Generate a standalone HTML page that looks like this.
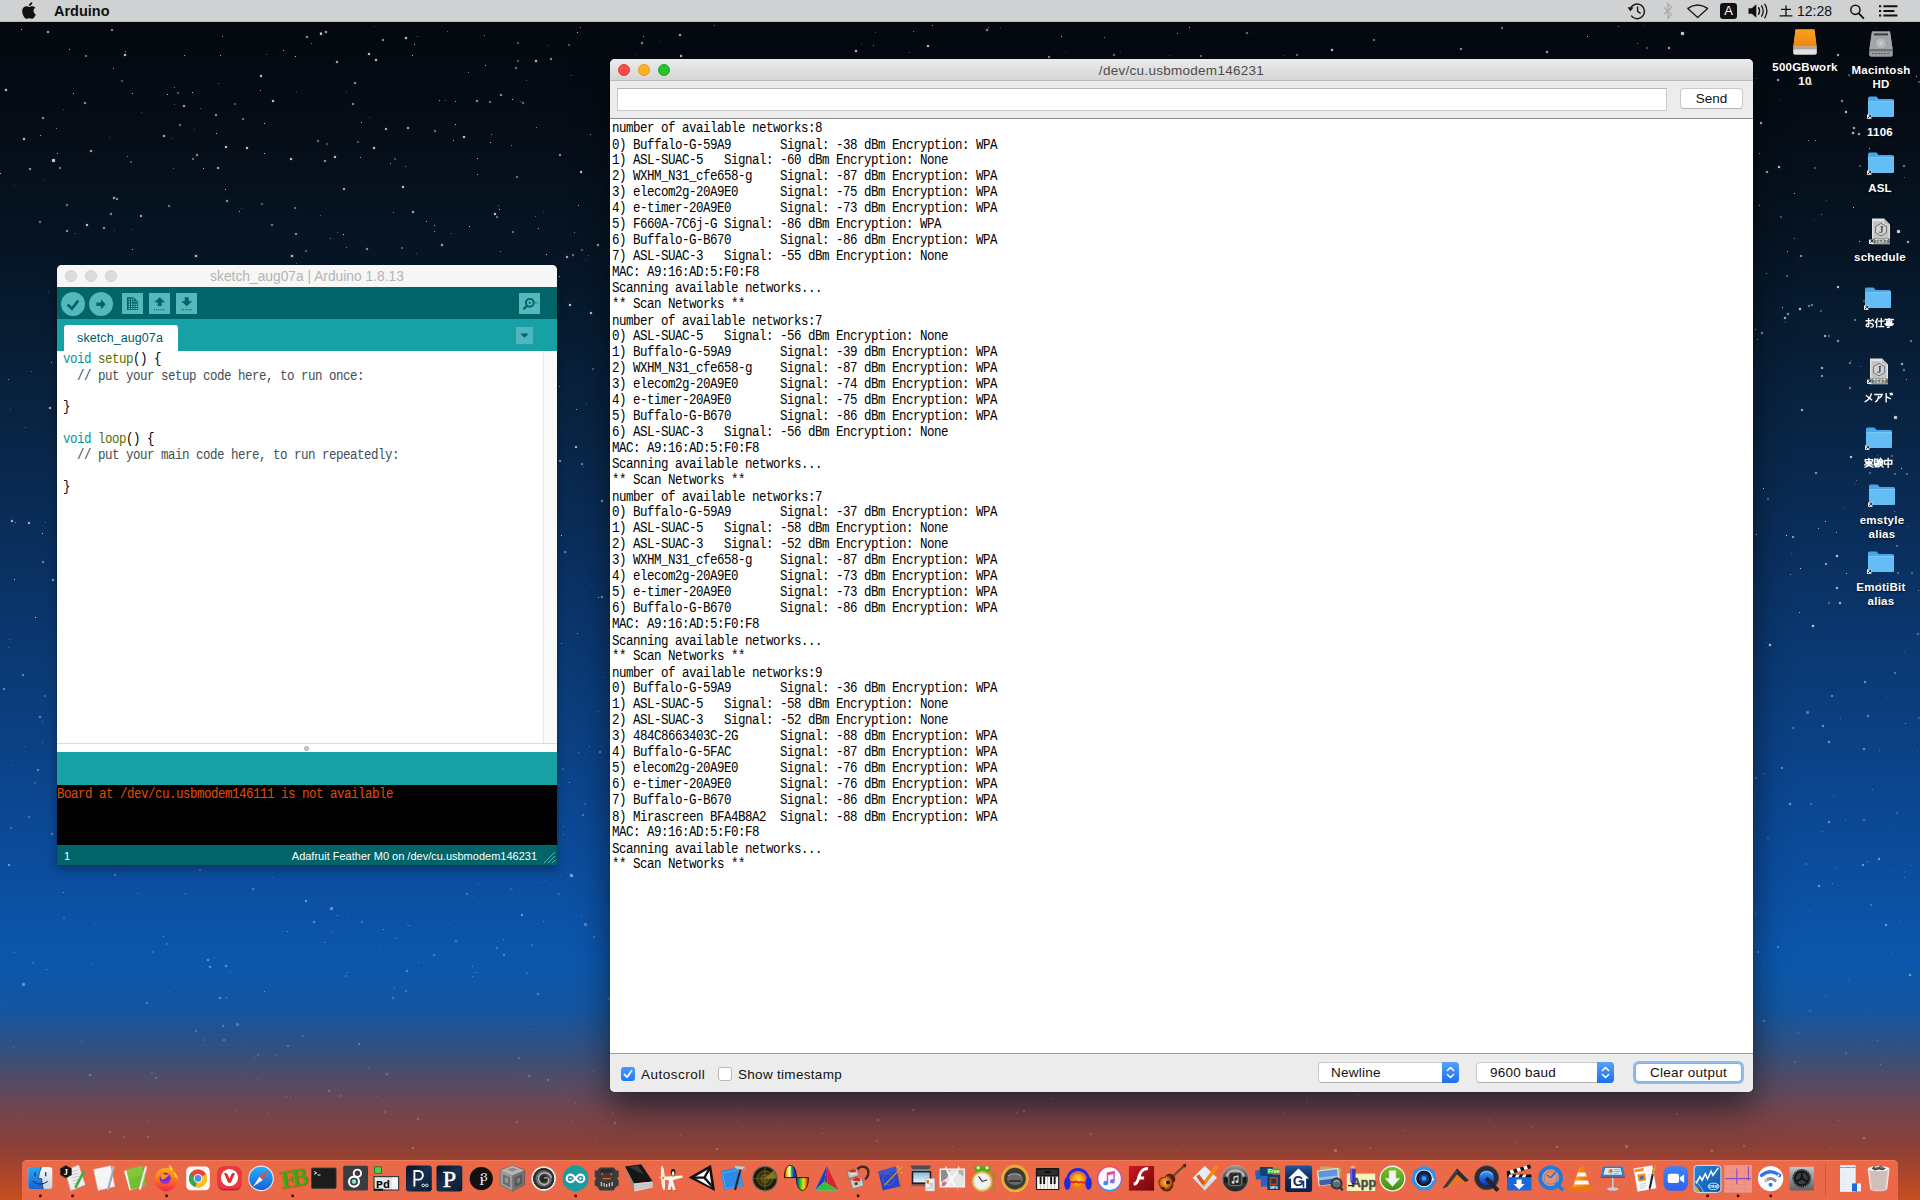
<!DOCTYPE html>
<html>
<head>
<meta charset="utf-8">
<title>Desktop</title>
<style>
*{box-sizing:border-box;margin:0;padding:0}
html,body{width:1920px;height:1200px;overflow:hidden}
body{font-family:"Liberation Sans",sans-serif;position:relative;
background:linear-gradient(to bottom,#04080d 0px,#050c15 120px,#061525 250px,#08223f 400px,#0a3060 560px,#0b3f80 720px,#0b4c9c 860px,#0b57ac 960px,#14559f 1010px,#33507f 1050px,#584b61 1085px,#77444a 1115px,#8a4038 1145px,#a8452c 1172px,#c74f20 1200px)}
.abs{position:absolute}
/* ---------- menubar ---------- */
#menubar{position:absolute;left:0;top:0;width:1920px;height:22px;background:#cfd1d2;border-bottom:1px solid #b9b9b9}
#menubar .app{position:absolute;left:54px;top:3px;font-weight:bold;font-size:14.5px;color:#111;letter-spacing:0px}
#menubar .clock{position:absolute;left:1797px;top:3px;font-size:14px;color:#111}
/* ---------- windows ---------- */
.win{position:absolute;overflow:hidden}
#ard{left:57px;top:265px;width:500px;height:600px;border-radius:5px 5px 0 0;background:#fff;box-shadow:0 5px 11px rgba(0,0,0,.32),0 0 1px rgba(0,0,0,.5)}
#ser{left:610px;top:59px;width:1143px;height:1033px;border-radius:5px;background:#ececec;box-shadow:0 16px 34px rgba(0,0,0,.52),0 0 1px rgba(0,0,0,.6)}
/*STARS*/
.st1{position:absolute;left:0;top:0;width:1px;height:1px;background:transparent;box-shadow:148px 1121px 0px rgba(200,222,250,0.32),439px 100px 0px rgba(235,240,250,0.65),185px 893px 0px rgba(200,222,250,0.52),593px 882px 0px rgba(200,222,250,0.16),1016px 1112px 0px rgba(200,222,250,0.32),1891px 952px 0px rgba(200,222,250,0.23),241px 1072px 0px rgba(200,222,250,0.14),1911px 1025px 0px rgba(200,222,250,0.10),46px 969px 0px rgba(200,222,250,0.52),239px 1035px 0px rgba(200,222,250,0.14),1877px 1040px 0px rgba(200,222,250,0.32),577px 32px 0px rgba(235,240,250,0.80),420px 1105px 0px rgba(200,222,250,0.10),1552px 1105px 0px rgba(200,222,250,0.10),1860px 366px 0px rgba(235,240,250,0.35),409px 1084px 0px rgba(200,222,250,0.10),451px 233px 0px rgba(235,240,250,0.35),988px 27px 0px rgba(235,240,250,0.50),267px 1113px 0px rgba(200,222,250,0.26),1808px 140px 0px rgba(235,240,250,0.50),57px 153px 0px rgba(235,240,250,0.80),1794px 238px 0px rgba(235,240,250,0.50),1766px 273px 0px rgba(235,240,250,0.50),536px 127px 0px rgba(235,240,250,0.50),512px 99px 0px rgba(235,240,250,0.80),503px 939px 0px rgba(200,222,250,0.42),92px 964px 0px rgba(200,222,250,0.33),913px 31px 0px rgba(235,240,250,0.50),374px 26px 0px rgba(235,240,250,0.25),174px 87px 0px rgba(235,240,250,0.50),1838px 1120px 0px rgba(200,222,250,0.26),472px 966px 0px rgba(200,222,250,0.42),595px 1081px 0px rgba(200,222,250,0.10),1830px 1148px 0px rgba(200,222,250,0.26),35px 617px 0px rgba(235,240,250,0.80),1877px 455px 0px rgba(235,240,250,0.25),290px 1097px 0px rgba(200,222,250,0.32),574px 232px 0px rgba(235,240,250,0.50),1911px 865px 0px rgba(200,222,250,0.23),1867px 1150px 0px rgba(200,222,250,0.20),577px 633px 0px rgba(235,240,250,0.50),499px 209px 0px rgba(235,240,250,0.80),1836px 532px 0px rgba(235,240,250,0.65),260px 90px 0px rgba(235,240,250,0.65),0px 173px 0px rgba(235,240,250,0.80),174px 104px 0px rgba(235,240,250,0.35),203px 168px 0px rgba(235,240,250,0.80),1618px 26px 0px rgba(235,240,250,0.50),113px 68px 0px rgba(235,240,250,0.65),472px 976px 0px rgba(200,222,250,0.33),1888px 829px 0px rgba(200,222,250,0.16),346px 247px 0px rgba(235,240,250,0.50),71px 974px 0px rgba(200,222,250,0.16),1840px 718px 0px rgba(200,222,250,0.33),1892px 588px 0px rgba(235,240,250,0.80),1876px 157px 0px rgba(235,240,250,0.35),1900px 1040px 0px rgba(200,222,250,0.20),132px 93px 0px rgba(235,240,250,0.80),426px 221px 0px rgba(235,240,250,0.65),272px 877px 0px rgba(200,222,250,0.23),407px 923px 0px rgba(200,222,250,0.23),576px 409px 0px rgba(235,240,250,0.65),1039px 1101px 0px rgba(200,222,250,0.26),75px 233px 0px rgba(235,240,250,0.35),1872px 789px 0px rgba(200,222,250,0.33),1904px 177px 0px rgba(235,240,250,0.35),1587px 36px 0px rgba(235,240,250,0.80),445px 100px 0px rgba(235,240,250,0.35),1359px 1150px 0px rgba(200,222,250,0.14),417px 36px 0px rgba(235,240,250,0.35),266px 54px 0px rgba(235,240,250,0.35),1869px 1012px 0px rgba(200,222,250,0.26),1813px 1031px 0px rgba(200,222,250,0.14),1833px 795px 0px rgba(200,222,250,0.33),235px 1110px 0px rgba(200,222,250,0.26),361px 122px 0px rgba(235,240,250,0.80),270px 1024px 0px rgba(200,222,250,0.10),25px 427px 0px rgba(235,240,250,0.35),164px 950px 0px rgba(200,222,250,0.16),1901px 468px 0px rgba(235,240,250,0.80),31px 371px 0px rgba(235,240,250,0.35),777px 1122px 0px rgba(200,222,250,0.10),1756px 78px 0px rgba(235,240,250,0.35),296px 91px 0px rgba(235,240,250,0.25),63px 109px 0px rgba(235,240,250,0.25),1777px 810px 0px rgba(200,222,250,0.23),416px 253px 0px rgba(235,240,250,0.25),603px 677px 0px rgba(200,222,250,0.33),42px 742px 0px rgba(200,222,250,0.33),348px 917px 0px rgba(200,222,250,0.23),590px 134px 0px rgba(235,240,250,0.65),225px 189px 0px rgba(235,240,250,0.80),1826px 200px 0px rgba(235,240,250,0.25),347px 972px 0px rgba(200,222,250,0.33),337px 232px 0px rgba(235,240,250,0.35),69px 49px 0px rgba(235,240,250,0.65),1832px 883px 0px rgba(200,222,250,0.42),512px 891px 0px rgba(200,222,250,0.16),1859px 241px 0px rgba(235,240,250,0.80),125px 51px 0px rgba(235,240,250,0.65),380px 949px 0px rgba(200,222,250,0.23),1621px 1118px 0px rgba(200,222,250,0.32),541px 882px 0px rgba(200,222,250,0.23),1104px 37px 0px rgba(235,240,250,0.50),1764px 773px 0px rgba(200,222,250,0.52),581px 915px 0px rgba(200,222,250,0.33),222px 36px 0px rgba(235,240,250,0.65),1794px 193px 0px rgba(235,240,250,0.65),1780px 99px 0px rgba(235,240,250,0.25),1872px 51px 0px rgba(235,240,250,0.35),1766px 642px 0px rgba(235,240,250,0.25),169px 991px 0px rgba(200,222,250,0.23),1283px 55px 0px rgba(235,240,250,0.25),1758px 204px 0px rgba(235,240,250,0.25),264px 991px 0px rgba(200,222,250,0.52),1889px 126px 0px rgba(235,240,250,0.35),600px 1044px 0px rgba(200,222,250,0.20),296px 263px 0px rgba(235,240,250,0.35),598px 597px 0px rgba(235,240,250,0.80),1818px 528px 0px rgba(235,240,250,0.65),580px 27px 0px rgba(235,240,250,0.50),941px 1131px 0px rgba(200,222,250,0.10),393px 212px 0px rgba(235,240,250,0.50),1755px 329px 0px rgba(235,240,250,0.65),192px 92px 0px rgba(235,240,250,0.80),520px 101px 0px rgba(235,240,250,0.35),56px 128px 0px rgba(235,240,250,0.50),1783px 962px 0px rgba(200,222,250,0.16),1885px 1061px 0px rgba(200,222,250,0.14),114px 230px 0px rgba(235,240,250,0.25),1872px 49px 0px rgba(235,240,250,0.35),453px 140px 0px rgba(235,240,250,0.65),545px 880px 0px rgba(200,222,250,0.23),533px 1029px 0px rgba(200,222,250,0.26),1894px 511px 0px rgba(235,240,250,0.50),295px 56px 0px rgba(235,240,250,0.80),287px 931px 0px rgba(200,222,250,0.52),586px 404px 0px rgba(235,240,250,0.25),1867px 861px 0px rgba(200,222,250,0.52),414px 44px 0px rgba(235,240,250,0.80),184px 55px 0px rgba(235,240,250,0.65),1177px 33px 0px rgba(235,240,250,0.65),498px 205px 0px rgba(235,240,250,0.35),343px 234px 0px rgba(235,240,250,0.80),950px 1094px 0px rgba(200,222,250,0.20),559px 276px 0px rgba(235,240,250,0.80),1763px 488px 0px rgba(235,240,250,0.80),1222px 1100px 0px rgba(200,222,250,0.10),1065px 51px 0px rgba(235,240,250,0.25),588px 255px 0px rgba(235,240,250,0.35),1846px 573px 0px rgba(235,240,250,0.80),590px 585px 0px rgba(235,240,250,0.25),1516px 1142px 0px rgba(200,222,250,0.32),24px 746px 0px rgba(200,222,250,0.23),583px 466px 0px rgba(235,240,250,0.25),194px 997px 0px rgba(200,222,250,0.23),240px 1043px 0px rgba(200,222,250,0.14),1787px 251px 0px rgba(235,240,250,0.65),589px 746px 0px rgba(200,222,250,0.42),13px 1047px 0px rgba(200,222,250,0.32),873px 45px 0px rgba(235,240,250,0.50),469px 226px 0px rgba(235,240,250,0.80),593px 1071px 0px rgba(200,222,250,0.26),21px 29px 0px rgba(235,240,250,0.80),8px 647px 0px rgba(235,240,250,0.25),218px 83px 0px rgba(235,240,250,0.35),346px 91px 0px rgba(235,240,250,0.25),1759px 153px 0px rgba(235,240,250,0.65),40px 135px 0px rgba(235,240,250,0.65),1906px 379px 0px rgba(235,240,250,0.65),45px 522px 0px rgba(235,240,250,0.35),571px 75px 0px rgba(235,240,250,0.35),636px 54px 0px rgba(235,240,250,0.25),578px 752px 0px rgba(200,222,250,0.42),1918px 590px 0px rgba(235,240,250,0.50),1836px 868px 0px rgba(200,222,250,0.42),714px 25px 0px rgba(235,240,250,0.50),500px 251px 0px rgba(235,240,250,0.50),575px 1103px 0px rgba(200,222,250,0.26),357px 1143px 0px rgba(200,222,250,0.14),511px 145px 0px rgba(235,240,250,0.50),25px 762px 0px rgba(200,222,250,0.16),659px 41px 0px rgba(235,240,250,0.25),490px 142px 0px rgba(235,240,250,0.80),1823px 717px 0px rgba(200,222,250,0.16),1851px 360px 0px rgba(235,240,250,0.25),737px 1109px 0px rgba(200,222,250,0.20),1879px 750px 0px rgba(200,222,250,0.33),395px 938px 0px rgba(200,222,250,0.52),909px 52px 0px rgba(235,240,250,0.35),324px 942px 0px rgba(200,222,250,0.52),643px 36px 0px rgba(235,240,250,0.65),42px 533px 0px rgba(235,240,250,0.80),14px 952px 0px rgba(200,222,250,0.42),485px 65px 0px rgba(235,240,250,0.65),264px 123px 0px rgba(235,240,250,0.80),10px 409px 0px rgba(235,240,250,0.25),1890px 80px 0px rgba(235,240,250,0.50),320px 215px 0px rgba(235,240,250,0.35),1845px 820px 0px rgba(200,222,250,0.33),220px 55px 0px rgba(235,240,250,0.65),578px 205px 0px rgba(235,240,250,0.65),1786px 535px 0px rgba(235,240,250,0.80),94px 923px 0px rgba(200,222,250,0.23),311px 43px 0px rgba(235,240,250,0.50),412px 55px 0px rgba(235,240,250,0.80),132px 249px 0px rgba(235,240,250,0.65),1403px 1130px 0px rgba(200,222,250,0.32),230px 1109px 0px rgba(200,222,250,0.10),559px 386px 0px rgba(235,240,250,0.50),141px 112px 0px rgba(235,240,250,0.25),547px 45px 0px rgba(235,240,250,0.25),1790px 574px 0px rgba(235,240,250,0.50),932px 25px 0px rgba(235,240,250,0.65),805px 1101px 0px rgba(200,222,250,0.20),312px 966px 0px rgba(200,222,250,0.16),563px 834px 0px rgba(200,222,250,0.42),627px 1139px 0px rgba(200,222,250,0.14),543px 921px 0px rgba(200,222,250,0.42),1759px 205px 0px rgba(235,240,250,0.65),163px 936px 0px rgba(200,222,250,0.52),1916px 76px 0px rgba(235,240,250,0.80),360px 157px 0px rgba(235,240,250,0.65),822px 1133px 0px rgba(200,222,250,0.32),241px 208px 0px rgba(235,240,250,0.25),1169px 55px 0px rgba(235,240,250,0.25),1785px 322px 0px rgba(235,240,250,0.35),1061px 36px 0px rgba(235,240,250,0.80),562px 1088px 0px rgba(200,222,250,0.20),1905px 723px 0px rgba(200,222,250,0.52),17px 1115px 0px rgba(200,222,250,0.20),449px 923px 0px rgba(200,222,250,0.23),1821px 214px 0px rgba(235,240,250,0.50),73px 93px 0px rgba(235,240,250,0.80),535px 216px 0px rgba(235,240,250,0.35),1097px 1132px 0px rgba(200,222,250,0.14),216px 133px 0px rgba(235,240,250,0.80),63px 892px 0px rgba(200,222,250,0.52),200px 108px 0px rgba(235,240,250,0.35),5px 1006px 0px rgba(200,222,250,0.20),337px 915px 0px rgba(200,222,250,0.52),9px 639px 0px rgba(235,240,250,0.25),226px 997px 0px rgba(200,222,250,0.52),598px 711px 0px rgba(200,222,250,0.33),383px 929px 0px rgba(200,222,250,0.52),1822px 831px 0px rgba(200,222,250,0.33),800px 1103px 0px rgba(200,222,250,0.10),1857px 1044px 0px rgba(200,222,250,0.10),14px 579px 0px rgba(235,240,250,0.80),1880px 1064px 0px rgba(200,222,250,0.32),596px 1138px 0px rgba(200,222,250,0.26),1825px 996px 0px rgba(200,222,250,0.33),1900px 921px 0px rgba(200,222,250,0.33),546px 254px 0px rgba(235,240,250,0.80),571px 1121px 0px rgba(200,222,250,0.26),563px 826px 0px rgba(200,222,250,0.42),1904px 652px 0px rgba(200,222,250,0.23),1893px 870px 0px rgba(200,222,250,0.16),1799px 612px 0px rgba(235,240,250,0.65),447px 31px 0px rgba(235,240,250,0.35),156px 1081px 0px rgba(200,222,250,0.14),1884px 56px 0px rgba(235,240,250,0.35),1757px 339px 0px rgba(235,240,250,0.65),329px 918px 0px rgba(200,222,250,0.16),15px 522px 0px rgba(235,240,250,0.50),409px 925px 0px rgba(200,222,250,0.52),1764px 987px 0px rgba(200,222,250,0.23),1643px 25px 0px rgba(235,240,250,0.25),1905px 871px 0px rgba(200,222,250,0.23),1652px 1107px 0px rgba(200,222,250,0.10),1876px 28px 0px rgba(235,240,250,0.25),561px 643px 0px rgba(235,240,250,0.50),14px 185px 0px rgba(235,240,250,0.25),332px 931px 0px rgba(200,222,250,0.42),561px 535px 0px rgba(235,240,250,0.80),42px 721px 0px rgba(200,222,250,0.33),1886px 697px 0px rgba(200,222,250,0.23),330px 238px 0px rgba(235,240,250,0.50),433px 1111px 0px rgba(200,222,250,0.14),526px 80px 0px rgba(235,240,250,0.35),1885px 945px 0px rgba(200,222,250,0.16),1763px 967px 0px rgba(200,222,250,0.23),1853px 207px 0px rgba(235,240,250,0.80),369px 117px 0px rgba(235,240,250,0.25),127px 156px 0px rgba(235,240,250,0.50),1917px 751px 0px rgba(200,222,250,0.23),493px 990px 0px rgba(200,222,250,0.16),60px 991px 0px rgba(200,222,250,0.16),472px 896px 0px rgba(200,222,250,0.16),390px 163px 0px rgba(235,240,250,0.65),434px 231px 0px rgba(235,240,250,0.50),368px 1067px 0px rgba(200,222,250,0.32),51px 362px 0px rgba(235,240,250,0.65),477px 158px 0px rgba(235,240,250,0.80),394px 987px 0px rgba(200,222,250,0.42),560px 876px 0px rgba(200,222,250,0.23),1815px 140px 0px rgba(235,240,250,0.65),194px 129px 0px rgba(235,240,250,0.25),35px 617px 0px rgba(235,240,250,0.35),1782px 307px 0px rgba(235,240,250,0.80),1637px 43px 0px rgba(235,240,250,0.50),424px 1135px 0px rgba(200,222,250,0.14),1800px 568px 0px rgba(235,240,250,0.80),680px 1135px 0px rgba(200,222,250,0.26),8px 379px 0px rgba(235,240,250,0.50),1844px 508px 0px rgba(235,240,250,0.25),1791px 553px 0px rgba(235,240,250,0.25),543px 211px 0px rgba(235,240,250,0.25),283px 50px 0px rgba(235,240,250,0.80),468px 72px 0px rgba(235,240,250,0.50),1908px 526px 0px rgba(235,240,250,0.35),517px 1075px 0px rgba(200,222,250,0.26),214px 957px 0px rgba(200,222,250,0.33),264px 153px 0px rgba(235,240,250,0.80),1825px 521px 0px rgba(235,240,250,0.80),239px 211px 0px rgba(235,240,250,0.65),1874px 1029px 0px rgba(200,222,250,0.20),131px 229px 0px rgba(235,240,250,0.25),1849px 76px 0px rgba(235,240,250,0.25),742px 1135px 0px rgba(200,222,250,0.10),48px 292px 0px rgba(235,240,250,0.25),376px 1096px 0px rgba(200,222,250,0.20),1808px 911px 0px rgba(200,222,250,0.16),1904px 877px 0px rgba(200,222,250,0.33),109px 137px 0px rgba(235,240,250,0.25),478px 884px 0px rgba(200,222,250,0.42),1000px 27px 0px rgba(235,240,250,0.25),254px 1057px 0px rgba(200,222,250,0.26),477px 174px 0px rgba(235,240,250,0.65),952px 1146px 0px rgba(200,222,250,0.26),585px 260px 0px rgba(235,240,250,0.25),743px 1127px 0px rgba(200,222,250,0.20),44px 179px 0px rgba(235,240,250,0.25),117px 918px 0px rgba(200,222,250,0.16),172px 138px 0px rgba(235,240,250,0.25),230px 972px 0px rgba(200,222,250,0.23),1755px 913px 0px rgba(200,222,250,0.42),518px 937px 0px rgba(200,222,250,0.16),1120px 52px 0px rgba(235,240,250,0.25),11px 765px 0px rgba(200,222,250,0.23),1890px 193px 0px rgba(235,240,250,0.25),875px 32px 0px rgba(235,240,250,0.35),569px 782px 0px rgba(200,222,250,0.52),1025px 1103px 0px rgba(200,222,250,0.20),1756px 534px 0px rgba(235,240,250,0.80),68px 934px 0px rgba(200,222,250,0.16),167px 94px 0px rgba(235,240,250,0.80),1856px 480px 0px rgba(235,240,250,0.35),1869px 148px 0px rgba(235,240,250,0.80),434px 225px 0px rgba(235,240,250,0.65),475px 972px 0px rgba(200,222,250,0.52),1814px 219px 0px rgba(235,240,250,0.25),1183px 1145px 0px rgba(200,222,250,0.20),418px 962px 0px rgba(200,222,250,0.33),861px 44px 0px rgba(235,240,250,0.25),1189px 27px 0px rgba(235,240,250,0.65),1855px 483px 0px rgba(235,240,250,0.25),137px 893px 0px rgba(200,222,250,0.33),484px 35px 0px rgba(235,240,250,0.50),455px 124px 0px rgba(235,240,250,0.80),405px 166px 0px rgba(235,240,250,0.50),1848px 980px 0px rgba(200,222,250,0.23),455px 101px 0px rgba(235,240,250,0.65),173px 168px 0px rgba(235,240,250,0.35),538px 228px 0px rgba(235,240,250,0.65),1912px 993px 0px rgba(200,222,250,0.16),491px 134px 0px rgba(235,240,250,0.50),331px 920px 0px rgba(200,222,250,0.16)}
.st2{position:absolute;left:0;top:0;width:2px;height:2px;background:transparent;box-shadow:1792px 727px 1px rgba(200,222,250,0.42),140px 215px 1px rgba(235,240,250,0.80),582px 814px 1px rgba(200,222,250,0.42),569px 304px 1px rgba(235,240,250,0.95),1810px 803px 1px rgba(200,222,250,0.33),257px 1079px 1px rgba(200,222,250,0.14),295px 233px 1px rgba(235,240,250,0.65),1090px 1133px 1px rgba(200,222,250,0.20),1863px 819px 1px rgba(200,222,250,0.33),1863px 748px 1px rgba(200,222,250,0.62),1246px 32px 1px rgba(235,240,250,0.50),86px 224px 1px rgba(235,240,250,0.95),1431px 1095px 1px rgba(200,222,250,0.26),1889px 438px 1px rgba(235,240,250,0.50),1837px 340px 1px rgba(235,240,250,0.65),1808px 305px 1px rgba(235,240,250,0.50),39px 716px 1px rgba(200,222,250,0.52),550px 58px 1px rgba(235,240,250,0.65),1897px 572px 1px rgba(235,240,250,0.35),593px 936px 1px rgba(200,222,250,0.33),29px 168px 1px rgba(235,240,250,0.65),113px 197px 1px rgba(235,240,250,0.80),500px 94px 1px rgba(235,240,250,0.65),1828px 821px 1px rgba(200,222,250,0.52),89px 1074px 1px rgba(200,222,250,0.38),285px 1096px 1px rgba(200,222,250,0.14),1282px 1112px 1px rgba(200,222,250,0.14),516px 176px 1px rgba(235,240,250,0.50),572px 254px 1px rgba(235,240,250,0.50),325px 31px 1px rgba(235,240,250,0.80),3px 688px 1px rgba(200,222,250,0.52),1460px 48px 1px rgba(235,240,250,0.65),1810px 83px 1px rgba(235,240,250,0.80),1817px 65px 1px rgba(235,240,250,0.80),257px 1054px 1px rgba(200,222,250,0.20),476px 100px 1px rgba(235,240,250,0.65),466px 893px 1px rgba(200,222,250,0.33),405px 37px 1px rgba(235,240,250,0.95),223px 1039px 1px rgba(200,222,250,0.32),179px 124px 1px rgba(235,240,250,0.50),219px 997px 1px rgba(200,222,250,0.52),1870px 904px 1px rgba(200,222,250,0.33),1531px 1126px 1px rgba(200,222,250,0.14),601px 596px 1px rgba(235,240,250,0.65),522px 102px 1px rgba(235,240,250,0.50),1668px 47px 1px rgba(235,240,250,0.80),37px 769px 1px rgba(200,222,250,0.52),84px 102px 1px rgba(235,240,250,0.65),47px 31px 1px rgba(235,240,250,0.80),163px 135px 1px rgba(235,240,250,0.80),1836px 587px 1px rgba(235,240,250,0.80),516px 1121px 1px rgba(200,222,250,0.26),1501px 27px 1px rgba(235,240,250,0.50),111px 29px 1px rgba(235,240,250,0.65),28px 522px 1px rgba(235,240,250,0.80),196px 154px 1px rgba(235,240,250,0.65),23px 138px 1px rgba(235,240,250,0.95),1828px 741px 1px rgba(200,222,250,0.62),90px 150px 1px rgba(235,240,250,0.80),326px 143px 1px rgba(235,240,250,0.35),1825px 563px 1px rgba(235,240,250,0.65),271px 224px 1px rgba(235,240,250,0.50),1864px 681px 1px rgba(200,222,250,0.62),63px 917px 1px rgba(200,222,250,0.23),195px 1030px 1px rgba(200,222,250,0.32),581px 463px 1px rgba(235,240,250,0.50),876px 1140px 1px rgba(200,222,250,0.20),1777px 946px 1px rgba(200,222,250,0.42),401px 247px 1px rgba(235,240,250,0.35),575px 446px 1px rgba(235,240,250,0.80),11px 520px 1px rgba(235,240,250,0.80),1831px 695px 1px rgba(200,222,250,0.52),207px 959px 1px rgba(200,222,250,0.52),1048px 56px 1px rgba(235,240,250,0.65),1903px 165px 1px rgba(235,240,250,0.50),1556px 1146px 1px rgba(200,222,250,0.32),986px 29px 1px rgba(235,240,250,0.65),116px 198px 1px rgba(235,240,250,0.65),1296px 54px 1px rgba(235,240,250,0.50),512px 231px 1px rgba(235,240,250,0.50),1369px 1147px 1px rgba(200,222,250,0.20),1854px 319px 1px rgba(235,240,250,0.50),42px 117px 1px rgba(235,240,250,0.65),599px 751px 1px rgba(200,222,250,0.52),261px 203px 1px rgba(235,240,250,0.35),1863px 1137px 1px rgba(200,222,250,0.38),28px 816px 1px rgba(200,222,250,0.33),496px 947px 1px rgba(200,222,250,0.33),1870px 131px 1px rgba(235,240,250,0.35),124px 54px 1px rgba(235,240,250,0.95),1763px 1020px 1px rgba(200,222,250,0.38),680px 55px 1px rgba(235,240,250,0.95),590px 312px 1px rgba(235,240,250,0.95),1743px 1145px 1px rgba(200,222,250,0.26),1896px 545px 1px rgba(235,240,250,0.35),1836px 555px 1px rgba(235,240,250,0.95),1767px 837px 1px rgba(200,222,250,0.23),352px 103px 1px rgba(235,240,250,0.65),121px 80px 1px rgba(235,240,250,0.35),528px 1075px 1px rgba(200,222,250,0.32),1820px 310px 1px rgba(235,240,250,0.35),1896px 812px 1px rgba(200,222,250,0.23),52px 579px 1px rgba(235,240,250,0.65),402px 186px 1px rgba(235,240,250,0.95),597px 244px 1px rgba(235,240,250,0.80),39px 221px 1px rgba(235,240,250,0.50),535px 60px 1px rgba(235,240,250,0.95),1780px 216px 1px rgba(235,240,250,0.35),1811px 304px 1px rgba(235,240,250,0.50),336px 61px 1px rgba(235,240,250,0.80),510px 888px 1px rgba(200,222,250,0.23),1879px 583px 1px rgba(235,240,250,0.35),246px 147px 1px rgba(235,240,250,0.95),1812px 625px 1px rgba(235,240,250,0.95),412px 1147px 1px rgba(200,222,250,0.38),386px 1073px 1px rgba(200,222,250,0.32),324px 160px 1px rgba(235,240,250,0.65),8px 864px 1px rgba(200,222,250,0.62),614px 1122px 1px rgba(200,222,250,0.32),927px 45px 1px rgba(235,240,250,0.95),1801px 409px 1px rgba(235,240,250,0.80),1818px 885px 1px rgba(200,222,250,0.62),373px 147px 1px rgba(235,240,250,0.95),1200px 55px 1px rgba(235,240,250,0.50),358px 1043px 1px rgba(200,222,250,0.38),1331px 49px 1px rgba(235,240,250,0.95),382px 39px 1px rgba(235,240,250,0.65),252px 888px 1px rgba(200,222,250,0.42),608px 998px 1px rgba(200,222,250,0.33),1757px 951px 1px rgba(200,222,250,0.42),1786px 275px 1px rgba(235,240,250,0.35),394px 158px 1px rgba(235,240,250,0.35),1869px 472px 1px rgba(235,240,250,0.35),521px 914px 1px rgba(200,222,250,0.62),1845px 111px 1px rgba(235,240,250,0.95),592px 368px 1px rgba(235,240,250,0.35),222px 1025px 1px rgba(200,222,250,0.38),51px 833px 1px rgba(200,222,250,0.42),1306px 1100px 1px rgba(200,222,250,0.20),1853px 127px 1px rgba(235,240,250,0.80),183px 105px 1px rgba(235,240,250,0.80),5px 89px 1px rgba(235,240,250,0.95),580px 171px 1px rgba(235,240,250,0.95),877px 1119px 1px rgba(200,222,250,0.32),455px 940px 1px rgba(200,222,250,0.33),384px 1111px 1px rgba(200,222,250,0.20),275px 1054px 1px rgba(200,222,250,0.14),209px 966px 1px rgba(200,222,250,0.52),392px 997px 1px rgba(200,222,250,0.33),85px 55px 1px rgba(235,240,250,0.50),1646px 47px 1px rgba(235,240,250,0.35),1050px 1098px 1px rgba(200,222,250,0.14),1789px 803px 1px rgba(200,222,250,0.62),1792px 536px 1px rgba(235,240,250,0.65),559px 154px 1px rgba(235,240,250,0.65),1874px 219px 1px rgba(235,240,250,0.80),1787px 313px 1px rgba(235,240,250,0.65),1809px 1010px 1px rgba(200,222,250,0.20),1903px 369px 1px rgba(235,240,250,0.50),564px 551px 1px rgba(235,240,250,0.50),1828px 602px 1px rgba(235,240,250,0.35),1777px 79px 1px rgba(235,240,250,0.80),357px 141px 1px rgba(235,240,250,0.35),526px 972px 1px rgba(200,222,250,0.23),1894px 672px 1px rgba(200,222,250,0.42),114px 874px 1px rgba(200,222,250,0.42),517px 42px 1px rgba(235,240,250,0.35),1918px 81px 1px rgba(235,240,250,0.35),123px 1136px 1px rgba(200,222,250,0.20),1849px 387px 1px rgba(235,240,250,0.50),42px 561px 1px rgba(235,240,250,0.50),434px 130px 1px rgba(235,240,250,0.50),1917px 633px 1px rgba(235,240,250,0.35),345px 975px 1px rgba(200,222,250,0.23),1805px 863px 1px rgba(200,222,250,0.23),177px 92px 1px rgba(235,240,250,0.35),147px 1136px 1px rgba(200,222,250,0.26),537px 993px 1px rgba(200,222,250,0.42),290px 158px 1px rgba(235,240,250,0.95),1357px 1094px 1px rgba(200,222,250,0.14),306px 36px 1px rgba(235,240,250,0.65),517px 60px 1px rgba(235,240,250,0.35),1885px 113px 1px rgba(235,240,250,0.80),1909px 974px 1px rgba(200,222,250,0.62),1766px 171px 1px rgba(235,240,250,0.80),368px 53px 1px rgba(235,240,250,0.95),412px 211px 1px rgba(235,240,250,0.80),317px 140px 1px rgba(235,240,250,0.50),601px 500px 1px rgba(235,240,250,0.65),234px 103px 1px rgba(235,240,250,0.35),1769px 644px 1px rgba(235,240,250,0.95),66px 230px 1px rgba(235,240,250,0.65),366px 248px 1px rgba(235,240,250,0.65),195px 255px 1px rgba(235,240,250,0.95),199px 869px 1px rgba(200,222,250,0.33),679px 34px 1px rgba(235,240,250,0.80),1488px 1119px 1px rgba(200,222,250,0.14),22px 674px 1px rgba(200,222,250,0.52),66px 204px 1px rgba(235,240,250,0.50),1894px 473px 1px rgba(235,240,250,0.35),1859px 165px 1px rgba(235,240,250,0.35),407px 127px 1px rgba(235,240,250,0.80),1852px 132px 1px rgba(235,240,250,0.95),612px 1112px 1px rgba(200,222,250,0.14),1797px 1032px 1px rgba(200,222,250,0.14),1794px 1061px 1px rgba(200,222,250,0.20),503px 954px 1px rgba(200,222,250,0.42),155px 1077px 1px rgba(200,222,250,0.26),1824px 335px 1px rgba(235,240,250,0.80),1858px 133px 1px rgba(235,240,250,0.80),531px 944px 1px rgba(200,222,250,0.23),1814px 167px 1px rgba(235,240,250,0.35),1839px 602px 1px rgba(235,240,250,0.80),559px 460px 1px rgba(235,240,250,0.65),354px 82px 1px rgba(235,240,250,0.65),463px 136px 1px rgba(235,240,250,0.95),146px 1002px 1px rgba(200,222,250,0.38),855px 50px 1px rgba(235,240,250,0.95),215px 114px 1px rgba(235,240,250,0.65),1867px 715px 1px rgba(200,222,250,0.52),1837px 286px 1px rgba(235,240,250,0.95),515px 67px 1px rgba(235,240,250,0.50),417px 1118px 1px rgba(200,222,250,0.26),1885px 924px 1px rgba(200,222,250,0.62),10px 827px 1px rgba(200,222,250,0.33),496px 216px 1px rgba(235,240,250,0.50),1906px 473px 1px rgba(235,240,250,0.35),1373px 39px 1px rgba(235,240,250,0.50),49px 407px 1px rgba(235,240,250,0.80),226px 200px 1px rgba(235,240,250,0.65),302px 1035px 1px rgba(200,222,250,0.20),1891px 455px 1px rgba(235,240,250,0.35),1869px 68px 1px rgba(235,240,250,0.35),1822px 725px 1px rgba(200,222,250,0.62),1878px 858px 1px rgba(200,222,250,0.62),1546px 51px 1px rgba(235,240,250,0.80),361px 921px 1px rgba(200,222,250,0.33),130px 161px 1px rgba(235,240,250,0.35),291px 255px 1px rgba(235,240,250,0.95),568px 44px 1px rgba(235,240,250,0.35),340px 1095px 1px rgba(200,222,250,0.20),584px 803px 1px rgba(200,222,250,0.23),1815px 472px 1px rgba(235,240,250,0.65),103px 227px 1px rgba(235,240,250,0.65),225px 965px 1px rgba(200,222,250,0.52),1918px 717px 1px rgba(200,222,250,0.23),225px 146px 1px rgba(235,240,250,0.95),152px 951px 1px rgba(200,222,250,0.23),1848px 74px 1px rgba(235,240,250,0.35),1755px 777px 1px rgba(200,222,250,0.33),32px 962px 1px rgba(200,222,250,0.23),343px 188px 1px rgba(235,240,250,0.80),1761px 332px 1px rgba(235,240,250,0.65),1023px 1110px 1px rgba(200,222,250,0.38),1711px 1150px 1px rgba(200,222,250,0.38),334px 156px 1px rgba(235,240,250,0.95),1837px 54px 1px rgba(235,240,250,0.80),59px 167px 1px rgba(235,240,250,0.50),168px 205px 1px rgba(235,240,250,0.50),385px 128px 1px rgba(235,240,250,0.80),192px 158px 1px rgba(235,240,250,0.50),441px 244px 1px rgba(235,240,250,0.80),433px 954px 1px rgba(200,222,250,0.33),1781px 767px 1px rgba(200,222,250,0.52),217px 167px 1px rgba(235,240,250,0.80),272px 100px 1px rgba(235,240,250,0.95),1863px 300px 1px rgba(235,240,250,0.35),1676px 1113px 1px rgba(200,222,250,0.20),1767px 498px 1px rgba(235,240,250,0.35),1841px 100px 1px rgba(235,240,250,0.65),581px 249px 1px rgba(235,240,250,0.35),1862px 864px 1px rgba(200,222,250,0.62),1821px 375px 1px rgba(235,240,250,0.65),518px 1057px 1px rgba(200,222,250,0.26),1799px 308px 1px rgba(235,240,250,0.95),406px 970px 1px rgba(200,222,250,0.42),1784px 317px 1px rgba(235,240,250,0.80),375px 59px 1px rgba(235,240,250,0.95),1800px 255px 1px rgba(235,240,250,0.65),1845px 1052px 1px rgba(200,222,250,0.20),1910px 340px 1px rgba(235,240,250,0.50),313px 921px 1px rgba(200,222,250,0.52),110px 213px 1px rgba(235,240,250,0.65),1849px 362px 1px rgba(235,240,250,0.50),558px 893px 1px rgba(200,222,250,0.23),1778px 166px 1px rgba(235,240,250,0.95),405px 990px 1px rgba(200,222,250,0.33),320px 32px 1px rgba(235,240,250,0.50),562px 768px 1px rgba(200,222,250,0.23),716px 1148px 1px rgba(200,222,250,0.32),34px 782px 1px rgba(200,222,250,0.23),294px 207px 1px rgba(235,240,250,0.50),81px 1041px 1px rgba(200,222,250,0.14),44px 695px 1px rgba(200,222,250,0.33),1828px 335px 1px rgba(235,240,250,0.35),912px 1109px 1px rgba(200,222,250,0.32),1760px 122px 1px rgba(235,240,250,0.95),320px 33px 1px rgba(235,240,250,0.95),1850px 456px 1px rgba(235,240,250,0.95),305px 900px 1px rgba(200,222,250,0.62),566px 256px 1px rgba(235,240,250,0.80),166px 943px 1px rgba(200,222,250,0.23),242px 118px 1px rgba(235,240,250,0.50),109px 1131px 1px rgba(200,222,250,0.26),328px 1090px 1px rgba(200,222,250,0.32),1821px 367px 1px rgba(235,240,250,0.80),1911px 572px 1px rgba(235,240,250,0.35),287px 1045px 1px rgba(200,222,250,0.32),641px 42px 1px rgba(235,240,250,0.65),547px 1079px 1px rgba(200,222,250,0.32),1783px 69px 1px rgba(235,240,250,0.35),305px 250px 1px rgba(235,240,250,0.35),1113px 54px 1px rgba(235,240,250,0.50),494px 213px 1px rgba(235,240,250,0.95),489px 101px 1px rgba(235,240,250,0.50),151px 1072px 1px rgba(200,222,250,0.20),1907px 241px 1px rgba(235,240,250,0.80),1901px 363px 1px rgba(235,240,250,0.80),203px 1039px 1px rgba(200,222,250,0.14),260px 75px 1px rgba(235,240,250,0.95)}
.st3{position:absolute;left:0;top:0;width:3px;height:3px;background:transparent;box-shadow:570px 874px 1px rgba(200,222,250,0.59),236px 1023px 1px rgba(200,222,250,0.30),330px 907px 1px rgba(200,222,250,0.49),52px 159px 1px rgba(235,240,250,0.90),22px 983px 1px rgba(200,222,250,0.49),1334px 1149px 1px rgba(200,222,250,0.30),1806px 711px 1px rgba(200,222,250,0.39),1894px 416px 1px rgba(235,240,250,0.90),584px 923px 1px rgba(200,222,250,0.39),1625px 1145px 1px rgba(200,222,250,0.30),1681px 32px 1px rgba(235,240,250,0.90),1897px 230px 1px rgba(235,240,250,0.90)}
/*ENDSTARS*/

/* ---------- arduino window ---------- */
#ard .tb{position:absolute;left:0;top:0;width:100%;height:22px;background:#f6f6f6;text-align:center;font-size:13.8px;line-height:23px;color:#b4b4b4}
.tl{position:absolute;width:12px;height:12px;border-radius:50%}
#ard .tl{background:#dcdcdc;border:1px solid #d1d1d1;top:5px}
#ard .tools{position:absolute;left:0;top:22px;width:100%;height:32px;background:#006468}
#ard .tabs{position:absolute;left:0;top:54px;width:100%;height:32px;background:#17a1a5}
#ard .tab{position:absolute;left:7px;top:6px;width:114px;height:26px;background:#fff;border-radius:3px 3px 0 0;color:#005c5f;font-size:12.5px;line-height:27px;text-align:center;letter-spacing:.08px;padding-right:2px}
#ard .btnc{position:absolute;top:4.5px;width:24px;height:24px;border-radius:50%;background:#54b8bc}
#ard .btns{position:absolute;top:6px;width:21px;height:21px;background:#54b8bc}
#ard .ed{position:absolute;left:0;top:86px;width:100%;height:392px;background:#fff}
#ard .ed pre{position:absolute;left:6px;top:1.3px;font-family:"Liberation Mono",monospace;font-size:12.5px;letter-spacing:-.5012px;line-height:14.5455px;transform:scaleY(1.1);transform-origin:0 0;color:#434f54}
#ard .kw{color:#00979c}.fn{color:#5e6d03}
#ard .cm{color:#434f54}
#ard .gut{position:absolute;right:0;top:0;width:14px;height:392px;background:#f9f9f9;border-left:1px solid #e8e8e8}
#ard .split{position:absolute;left:0;top:478px;width:100%;height:9px;background:#fff;border-top:1px solid #dcdcdc}
#ard .stat{position:absolute;left:0;top:487px;width:100%;height:33px;background:#17a1a5}
#ard .con{position:absolute;left:0;top:520px;width:100%;height:60px;background:#000;color:#e34c00;font-family:"Liberation Mono",monospace;font-size:11.667px;line-height:16px;padding-top:2px}
#ard .bot{position:absolute;left:0;top:580px;width:100%;height:20px;background:#006468;color:#fff;font-size:11px;line-height:22px}

/* ---------- serial monitor ---------- */
#ser .tb{position:absolute;left:0;top:0;width:100%;height:22px;background:linear-gradient(#ebebeb,#d5d5d5);border-bottom:1px solid #b9b9b9;text-align:center;font-size:13.5px;line-height:23px;color:#4c4c4c;letter-spacing:.28px}
#ser .tl{top:5px}
#ser .inrow{position:absolute;left:0;top:22px;width:100%;height:38px;background:#ececec;border-bottom:1px solid #8f8f8f}
#ser .infield{position:absolute;left:7px;top:7px;width:1050px;height:23px;background:#fff;border:1px solid #c9c9c9;border-top-color:#b5b5b5}
.mbtn{position:absolute;background:#fff;border:1px solid #c9c9c9;border-bottom-color:#b3b3b3;border-radius:4px;font-size:13.5px;color:#111;text-align:center}
#ser .out{position:absolute;left:0;top:60px;width:100%;height:934px;background:#fff}
#ser .out pre{position:absolute;left:2px;top:2px;font-family:"Liberation Mono",monospace;font-size:12.5px;letter-spacing:-.5012px;line-height:14.5455px;transform:scaleY(1.1);transform-origin:0 0;color:#000;tab-size:8;-moz-tab-size:8}
#ser .bb{position:absolute;left:0;top:994px;width:100%;height:39px;background:#ececec;border-top:1px solid #9c9c9c;font-size:13.5px;color:#111}
.cb{position:absolute;top:13px;width:14px;height:14px;border-radius:3px}
.sel{position:absolute;top:8px;height:21px;background:#fff;border:1px solid #c9c9c9;border-bottom-color:#b0b0b0;border-radius:4px;font-size:13.5px;line-height:20px;letter-spacing:.25px;color:#111}
.sel .step{position:absolute;right:-1px;top:-1px;width:17px;height:21px;border-radius:0 4px 4px 0;background:linear-gradient(#55a2f8,#1b70f2)}

/* ---------- dock ---------- */
#dock{position:absolute;left:22px;top:1160px;width:1876px;height:40px;background:#eb6849;border-radius:5px 5px 0 0;box-shadow:inset 0 1px 0 rgba(255,160,130,.35)}

/* ---------- desktop icons ---------- */
.dl{position:absolute;width:100px;text-align:center;color:#fff;font-weight:bold;font-size:11.500px;line-height:14px;white-space:nowrap;text-shadow:0 1px 2px rgba(0,0,0,.8)}
.mono{font-family:"Liberation Mono",monospace}
</style>
</head>
<body>
<div id="stars"><div class="st1"></div><div class="st2"></div><div class="st3"></div></div>
<div id="menubar">
  <svg class="abs" style="left:19px;top:0px" width="20" height="21" viewBox="0 0 24 24"><path fill="#111" d="M18.71 19.5c-.83 1.24-1.71 2.45-3.05 2.47-1.34.03-1.77-.79-3.29-.79-1.53 0-2 .77-3.27.82-1.31.05-2.3-1.32-3.14-2.53C4.25 17 2.94 12.45 4.7 9.39c.87-1.52 2.43-2.48 4.12-2.51 1.28-.02 2.5.87 3.29.87.78 0 2.26-1.07 3.81-.91.65.03 2.47.26 3.64 1.98-.09.06-2.17 1.28-2.15 3.81.03 3.02 2.65 4.03 2.68 4.04-.03.07-.42 1.44-1.38 2.83M13 3.5c.73-.83 1.94-1.46 2.94-1.5.13 1.17-.34 2.35-1.04 3.19-.69.85-1.83 1.51-2.95 1.42-.15-1.15.41-2.35 1.05-3.11z"/></svg>
  <div class="app">Arduino</div>
  <!-- time machine -->
  <svg class="abs" style="left:1626px;top:1px" width="22" height="20" viewBox="0 0 22 20"><path d="M4.6 7.2A7.3 7.3 0 1 1 5.2 14.6" fill="none" stroke="#1a1a1a" stroke-width="1.5"/><path d="M1.6 6.2 L7.6 6.6 L4.3 10.6z" fill="#1a1a1a"/><path d="M11.6 5.4v5l3 2" fill="none" stroke="#1a1a1a" stroke-width="1.4"/></svg>
  <!-- bluetooth -->
  <svg class="abs" style="left:1661px;top:2px" width="14" height="18" viewBox="0 0 14 18"><path d="M2.8 5.2l7.6 7.2L6.8 16.2V1.8l3.6 3.6-7.6 7.4" fill="none" stroke="#a9a9a9" stroke-width="1.2"/></svg>
  <!-- wifi -->
  <svg class="abs" style="left:1686px;top:3px" width="24" height="16" viewBox="0 0 24 16"><path d="M1.8 5.4Q11.6 -1.4 21.6 5.4L11.7 14.6z" fill="none" stroke="#1a1a1a" stroke-width="1.3" stroke-linejoin="round"/></svg>
  <!-- input A -->
  <div class="abs" style="left:1720px;top:3px;width:17px;height:16px;background:#111;border-radius:3px;color:#fff;font-size:13px;line-height:16px;text-align:center">A</div>
  <!-- volume -->
  <svg class="abs" style="left:1747px;top:2px" width="24" height="18" viewBox="0 0 24 18"><path d="M1.5 6.2h3.3L9.3 2.2v13.6L4.8 11.8H1.5z" fill="#111"/><path d="M11.6 5.6q2 3.4 0 6.8M14.6 3.8q3.2 5.2 0 10.4M17.8 2.2q4.2 6.8 0 13.6" fill="none" stroke="#111" stroke-width="1.3" stroke-linecap="round"/></svg>
  <!-- kanji do (saturday) drawn -->
  <svg class="abs" style="left:1779px;top:5px" width="14" height="12" viewBox="0 0 14 12"><path d="M2 4.4h10M7 0.6v10.2M0.6 10.9h12.8" fill="none" stroke="#111" stroke-width="1.3"/></svg>
  <div class="clock">12:28</div>
  <!-- search -->
  <svg class="abs" style="left:1849px;top:3px" width="16" height="17" viewBox="0 0 16 17"><circle cx="6.4" cy="6.8" r="4.6" fill="none" stroke="#111" stroke-width="1.5"/><path d="M9.8 10.4l4.6 4.8" stroke="#111" stroke-width="1.8" stroke-linecap="round"/></svg>
  <!-- list -->
  <svg class="abs" style="left:1878px;top:4px" width="20" height="14" viewBox="0 0 20 14"><path d="M1 2.3h2.2M1 6.9h2.2M1 11.5h2.2" stroke="#111" stroke-width="2"/><path d="M5.4 2.3h14M5.4 6.9h11M5.4 11.5h14" stroke="#111" stroke-width="2"/></svg>
</div>

<div id="ard" class="win">
  <div class="tb">sketch_aug07a | Arduino 1.8.13</div>
  <div class="tl" style="left:8px"></div><div class="tl" style="left:28px"></div><div class="tl" style="left:48px"></div>
  <div class="tools">
    <div class="btnc" style="left:4px"><svg width="24" height="24" viewBox="0 0 24 24"><path d="M6.6 12.5l4.3 4.3 6.3-8.2" fill="none" stroke="#006468" stroke-width="2.7"/></svg></div>
    <div class="btnc" style="left:31.5px"><svg width="24" height="24" viewBox="0 0 24 24"><path d="M7.4 10.4h4.6V7l4.6 5.2-4.6 5.3v-3.6H7.4z" fill="#006468"/></svg></div>
    <div class="btns" style="left:65px"><svg width="21" height="21" viewBox="0 0 21 21"><path d="M5 4.2h6.6l4.2 4.2v8.6H5z" fill="#006468"/><path d="M11.4 4.4v4.2h4.2" fill="none" stroke="#54b8bc" stroke-width=".7"/><g fill="#7ccdd0"><rect x="6.6" y="5.8" width="1.3" height="1.3"/><rect x="9" y="5.8" width="1.3" height="1.3"/><rect x="6.6" y="8.2" width="1.3" height="1.3"/><rect x="9" y="8.2" width="1.3" height="1.3"/><rect x="6.6" y="10.6" width="1.3" height="1.3"/><rect x="9" y="10.6" width="1.3" height="1.3"/><rect x="11.4" y="10.6" width="1.3" height="1.3"/><rect x="13.6" y="10.6" width="1.3" height="1.3"/><rect x="6.6" y="12.8" width="1.3" height="1.3"/><rect x="9" y="12.8" width="1.3" height="1.3"/><rect x="11.4" y="12.8" width="1.3" height="1.3"/><rect x="13.6" y="12.8" width="1.3" height="1.3"/><rect x="6.6" y="15" width="1.3" height="1.3"/><rect x="9" y="15" width="1.3" height="1.3"/><rect x="11.4" y="15" width="1.3" height="1.3"/><rect x="13.6" y="15" width="1.3" height="1.3"/></g></svg></div>
    <div class="btns" style="left:92px"><svg width="21" height="21" viewBox="0 0 21 21"><path d="M10.7 4.2l5.4 5h-3.4v3.8h-4V9.2H5.3z" fill="#006468"/><path d="M5 16.8h11.4" stroke="#006468" stroke-width="1.1" stroke-dasharray="1.1 0.8"/></svg></div>
    <div class="btns" style="left:119px"><svg width="21" height="21" viewBox="0 0 21 21"><path d="M10.7 13.2l5.4-5h-3.4V4.2h-4v4H5.3z" fill="#006468"/><path d="M5 16.8h11.4" stroke="#006468" stroke-width="1.1" stroke-dasharray="1.1 0.8"/></svg></div>
    <div class="btns" style="left:462px"><svg width="21" height="21" viewBox="0 0 21 21"><circle cx="10.8" cy="9.8" r="3.9" fill="none" stroke="#006468" stroke-width="1.9"/><circle cx="10.8" cy="9.8" r="1.1" fill="#006468"/><path d="M8 12.8l-3.6 3.6" stroke="#006468" stroke-width="2.2"/><path d="M15.8 9.8h3.4" stroke="#006468" stroke-width="1.1" stroke-dasharray="1 .8"/></svg></div>
  </div>
  <div class="tabs">
    <div class="tab">sketch_aug07a</div>
    <div class="abs" style="left:459px;top:8px;width:17px;height:17px;background:#4db7bb"><svg width="17" height="17" viewBox="0 0 17 17"><path d="M4.2 6.4h8.6l-4.3 4.4z" fill="#006468"/></svg></div>
  </div>
  <div class="ed">
<pre><span class="kw">void</span> <span class="fn">setup</span><span style="color:#000">() {</span>
<span class="cm">  // put your setup code here, to run once:</span>

<span style="color:#000">}</span>

<span class="kw">void</span> <span class="fn">loop</span><span style="color:#000">() {</span>
<span class="cm">  // put your main code here, to run repeatedly:</span>

<span style="color:#000">}</span></pre>
    <div class="gut"></div>
  </div>
  <div class="split"><div class="abs" style="left:247px;top:2px;width:5px;height:5px;border-radius:50%;background:#c8c8c8;border:1px solid #aaa"></div></div>
  <div class="stat"></div>
  <div class="con"><div style="font-size:12.5px;letter-spacing:-.5012px;line-height:14.5455px;transform:scaleY(1.1);transform-origin:0 0;white-space:pre">Board at /dev/cu.usbmodem146111 is not available</div></div>
  <div class="bot"><span class="abs" style="left:7px">1</span><span class="abs" style="right:20px;white-space:nowrap">Adafruit Feather M0 on /dev/cu.usbmodem146231</span>
    <svg class="abs" style="right:1px;bottom:1px" width="14" height="14" viewBox="0 0 14 14"><path d="M13 2L2 13M13 6L6 13M13 10l-3 3" stroke="#4db7bb" stroke-width="1"/></svg>
  </div>
</div>
<div id="ser" class="win">
  <div class="tb">/dev/cu.usbmodem146231</div>
  <div class="tl" style="left:8px;background:#fb4b47;border:1px solid #e03a37"></div>
  <div class="tl" style="left:28px;background:#fcb024;border:1px solid #e09a1c"></div>
  <div class="tl" style="left:48px;background:#28c231;border:1px solid #1ea726"></div>
  <div class="inrow">
    <div class="infield"></div>
    <div class="mbtn" style="left:1070px;top:7px;width:63px;height:21px;line-height:19px">Send</div>
  </div>
  <div class="out"><pre>number of available networks:8
0) Buffalo-G-59A9	Signal: -38 dBm Encryption: WPA
1) ASL-SUAC-5	Signal: -60 dBm Encryption: None
2) WXHM_N31_cfe658-g	Signal: -87 dBm Encryption: WPA
3) elecom2g-20A9E0	Signal: -75 dBm Encryption: WPA
4) e-timer-20A9E0	Signal: -73 dBm Encryption: WPA
5) F660A-7C6j-G	Signal: -86 dBm Encryption: WPA
6) Buffalo-G-B670	Signal: -86 dBm Encryption: WPA
7) ASL-SUAC-3	Signal: -55 dBm Encryption: None
MAC: A9:16:AD:5:F0:F8
Scanning available networks...
** Scan Networks **
number of available networks:7
0) ASL-SUAC-5	Signal: -56 dBm Encryption: None
1) Buffalo-G-59A9	Signal: -39 dBm Encryption: WPA
2) WXHM_N31_cfe658-g	Signal: -87 dBm Encryption: WPA
3) elecom2g-20A9E0	Signal: -74 dBm Encryption: WPA
4) e-timer-20A9E0	Signal: -75 dBm Encryption: WPA
5) Buffalo-G-B670	Signal: -86 dBm Encryption: WPA
6) ASL-SUAC-3	Signal: -56 dBm Encryption: None
MAC: A9:16:AD:5:F0:F8
Scanning available networks...
** Scan Networks **
number of available networks:7
0) Buffalo-G-59A9	Signal: -37 dBm Encryption: WPA
1) ASL-SUAC-5	Signal: -58 dBm Encryption: None
2) ASL-SUAC-3	Signal: -52 dBm Encryption: None
3) WXHM_N31_cfe658-g	Signal: -87 dBm Encryption: WPA
4) elecom2g-20A9E0	Signal: -73 dBm Encryption: WPA
5) e-timer-20A9E0	Signal: -73 dBm Encryption: WPA
6) Buffalo-G-B670	Signal: -86 dBm Encryption: WPA
MAC: A9:16:AD:5:F0:F8
Scanning available networks...
** Scan Networks **
number of available networks:9
0) Buffalo-G-59A9	Signal: -36 dBm Encryption: WPA
1) ASL-SUAC-5	Signal: -58 dBm Encryption: None
2) ASL-SUAC-3	Signal: -52 dBm Encryption: None
3) 484C8663403C-2G	Signal: -88 dBm Encryption: WPA
4) Buffalo-G-5FAC	Signal: -87 dBm Encryption: WPA
5) elecom2g-20A9E0	Signal: -76 dBm Encryption: WPA
6) e-timer-20A9E0	Signal: -76 dBm Encryption: WPA
7) Buffalo-G-B670	Signal: -86 dBm Encryption: WPA
8) Mirascreen BFA4B8A2	Signal: -88 dBm Encryption: WPA
MAC: A9:16:AD:5:F0:F8
Scanning available networks...
** Scan Networks **</pre></div>
  <div class="bb">
    <div class="cb" style="left:11px;background:linear-gradient(#4a9bf8,#2179f3)"><svg width="14" height="14" viewBox="0 0 14 14"><path d="M3.4 7.4l2.6 2.8 4.6-6.4" fill="none" stroke="#fff" stroke-width="1.7" stroke-linecap="round" stroke-linejoin="round"/></svg></div>
    <span class="abs" style="left:31px;top:13px;letter-spacing:.5px">Autoscroll</span>
    <div class="cb" style="left:108px;background:#fff;border:1px solid #b9b9b9"></div>
    <span class="abs" style="left:128px;top:13px;letter-spacing:.3px">Show timestamp</span>
    <div class="sel" style="left:708px;width:141px"><span class="abs" style="left:12px">Newline</span><div class="step"><svg width="17" height="21" viewBox="0 0 17 20"><path d="M5.4 8l3.1-3 3.1 3M5.4 12l3.1 3 3.1-3" fill="none" stroke="#fff" stroke-width="1.5" stroke-linecap="round" stroke-linejoin="round"/></svg></div></div>
    <div class="sel" style="left:866px;width:138px"><span class="abs" style="left:13px">9600 baud</span><div class="step"><svg width="17" height="21" viewBox="0 0 17 20"><path d="M5.4 8l3.1-3 3.1 3M5.4 12l3.1 3 3.1-3" fill="none" stroke="#fff" stroke-width="1.5" stroke-linecap="round" stroke-linejoin="round"/></svg></div></div>
    <div class="mbtn" style="left:1025px;top:9px;width:107px;height:19px;line-height:18px;border-color:#7fb2ec;box-shadow:0 0 0 2px #8dbbee;letter-spacing:.3px">Clear output</div>
  </div>
</div>

<!--DESK-->
<svg class="abs" style="left:1791px;top:28px" width="28" height="28" viewBox="0 0 28 28"><defs><linearGradient id="gOr" x1="0" y1="0" x2="0" y2="1"><stop offset="0" stop-color="#f7a21e"/><stop offset="1" stop-color="#ee8410"/></linearGradient></defs><path d="M4.600 1.600h18.800l2.200 17v6.400a1.400 1.400 0 0 1-1.400 1.400H3.800a1.400 1.400 0 0 1-1.400-1.400v-6.400z" fill="#d2d2d2"/><path d="M4.600 1.600h18.800l2.200 17H2.400z" fill="url(#gOr)"/><path d="M2.400 18.600h23.200v3H2.400z" fill="#a8a8a8"/><path d="M2.400 21.600h23.200v3.400a1.400 1.400 0 0 1-1.400 1.400H3.800a1.400 1.400 0 0 1-1.400-1.400z" fill="#e2e2e2"/></svg>
<svg class="abs" style="left:1867px;top:30px" width="28" height="28" viewBox="0 0 28 28"><path d="M5 1.600h18l2.600 17.400v6a1.400 1.400 0 0 1-1.400 1.400H3.800a1.400 1.400 0 0 1-1.400-1.400v-6z" fill="#8e9294"/><path d="M5 1.600h18l2.600 17.400H2.400z" fill="#a2a6a8"/><path d="M7 3.400h14v2H7z" fill="#3c3e40"/><circle cx="14" cy="13.400" r="5.600" fill="#b4b8ba" stroke="#8a8e90" stroke-width=".6"/><circle cx="14" cy="13.400" r="2" fill="#c8cccc"/><path d="M2.400 19h23.200v2.400H2.400z" fill="#6e7274"/><path d="M2.400 21.400h23.200v3.600a1.400 1.400 0 0 1-1.400 1.400H3.800a1.400 1.400 0 0 1-1.400-1.400z" fill="#9a9ea0"/><path d="M5 23.600h18" stroke="#5a5e60" stroke-width="1" stroke-dasharray="2 1"/></svg>
<div class="dl" style="left:1755px;top:60px;letter-spacing:0.25px">500GBwork</div>
<div class="dl" style="left:1755px;top:74px;letter-spacing:0.25px">10</div>
<div class="dl" style="left:1831px;top:63px;letter-spacing:0.25px">Macintosh</div>
<div class="dl" style="left:1831px;top:77px;letter-spacing:0.25px">HD</div>
<svg class="abs" style="left:1867px;top:95px" width="28" height="25" viewBox="0 0 28 25"><path d="M1 3.200a1.600 1.600 0 0 1 1.600-1.600h6.800l2.400 2.400h13.600a1.600 1.600 0 0 1 1.600 1.600v14.800a1.600 1.600 0 0 1-1.600 1.600H2.600a1.600 1.600 0 0 1-1.600-1.600z" fill="#4aa6e6"/><path d="M1 6.600h26v13.800a1.600 1.600 0 0 1-1.600 1.600H2.600a1.600 1.600 0 0 1-1.600-1.600z" fill="#64bdf4"/><path d="M1 6.600h26" stroke="#8cd2fa" stroke-width=".7"/><rect x="0" y="19.400" width="4.400" height="4.400" fill="#f4f4f4"/><path d="M1 23l2.400-2.600M1.600 20.200h2v2" fill="none" stroke="#111" stroke-width=".9"/></svg>
<div class="dl" style="left:1830px;top:125px;letter-spacing:0.25px">1106</div>
<svg class="abs" style="left:1867px;top:151px" width="28" height="25" viewBox="0 0 28 25"><path d="M1 3.200a1.600 1.600 0 0 1 1.600-1.600h6.800l2.400 2.400h13.600a1.600 1.600 0 0 1 1.600 1.600v14.800a1.600 1.600 0 0 1-1.600 1.600H2.600a1.600 1.600 0 0 1-1.600-1.600z" fill="#4aa6e6"/><path d="M1 6.600h26v13.800a1.600 1.600 0 0 1-1.600 1.600H2.600a1.600 1.600 0 0 1-1.600-1.600z" fill="#64bdf4"/><path d="M1 6.600h26" stroke="#8cd2fa" stroke-width=".7"/><rect x="0" y="19.400" width="4.400" height="4.400" fill="#f4f4f4"/><path d="M1 23l2.400-2.600M1.600 20.200h2v2" fill="none" stroke="#111" stroke-width=".9"/></svg>
<div class="dl" style="left:1830px;top:181px;letter-spacing:0.25px">ASL</div>
<svg class="abs" style="left:1869px;top:218px" width="24" height="28" viewBox="0 0 24 28"><path d="M3 .6h12l6 6v19.600H3z" fill="#e2e2e2"/><path d="M15 .6l6 6h-6z" fill="#bcbcbc"/><path d="M4.400 3.200h9.600v3.800h5.600v14.200H4.400z" fill="#a8a8a8" opacity=".55"/><path d="M12 5.400l5.400 3.100v6.200L12 17.800l-5.400-3.100V8.500z" fill="#d4d4d4" stroke="#6a6a6a" stroke-width=".9"/><text x="12" y="15" font-family="Liberation Serif" font-weight="bold" font-size="9.500" fill="#4a4a4a" text-anchor="middle">J</text><rect x="3" y="20.600" width="18" height="5" fill="#6e6e6e"/><text x="12.600" y="24.900" font-family="Liberation Sans" font-weight="bold" font-size="4.600" fill="#e8e8e8" text-anchor="middle" letter-spacing=".3">TEXT</text><rect x="0" y="21.600" width="4.400" height="4.400" fill="#f4f4f4"/><path d="M1 25.200l2.400-2.600M1.600 22.400h2v2" fill="none" stroke="#111" stroke-width=".9"/></svg>
<div class="dl" style="left:1830px;top:250px;letter-spacing:0.25px">schedule</div>
<svg class="abs" style="left:1864px;top:286px" width="28" height="25" viewBox="0 0 28 25"><path d="M1 3.200a1.600 1.600 0 0 1 1.600-1.600h6.800l2.400 2.400h13.600a1.600 1.600 0 0 1 1.600 1.600v14.800a1.600 1.600 0 0 1-1.600 1.600H2.600a1.600 1.600 0 0 1-1.600-1.600z" fill="#4aa6e6"/><path d="M1 6.600h26v13.800a1.600 1.600 0 0 1-1.600 1.600H2.600a1.600 1.600 0 0 1-1.600-1.600z" fill="#64bdf4"/><path d="M1 6.600h26" stroke="#8cd2fa" stroke-width=".7"/><rect x="0" y="19.400" width="4.400" height="4.400" fill="#f4f4f4"/><path d="M1 23l2.400-2.600M1.600 20.200h2v2" fill="none" stroke="#111" stroke-width=".9"/></svg>
<svg class="abs" style="left:1867px;top:358px" width="24" height="28" viewBox="0 0 24 28"><path d="M3 .6h12l6 6v19.600H3z" fill="#e2e2e2"/><path d="M15 .6l6 6h-6z" fill="#bcbcbc"/><path d="M4.400 3.200h9.600v3.800h5.600v14.200H4.400z" fill="#a8a8a8" opacity=".55"/><path d="M12 5.400l5.400 3.100v6.200L12 17.800l-5.400-3.100V8.500z" fill="#d4d4d4" stroke="#6a6a6a" stroke-width=".9"/><text x="12" y="15" font-family="Liberation Serif" font-weight="bold" font-size="9.500" fill="#4a4a4a" text-anchor="middle">J</text><rect x="3" y="20.600" width="18" height="5" fill="#6e6e6e"/><text x="12.600" y="24.900" font-family="Liberation Sans" font-weight="bold" font-size="4.600" fill="#e8e8e8" text-anchor="middle" letter-spacing=".3">TEXT</text><rect x="0" y="21.600" width="4.400" height="4.400" fill="#f4f4f4"/><path d="M1 25.200l2.400-2.600M1.600 22.400h2v2" fill="none" stroke="#111" stroke-width=".9"/></svg>
<svg class="abs" style="left:1865px;top:426px" width="28" height="25" viewBox="0 0 28 25"><path d="M1 3.200a1.600 1.600 0 0 1 1.600-1.600h6.800l2.400 2.400h13.600a1.600 1.600 0 0 1 1.600 1.600v14.800a1.600 1.600 0 0 1-1.600 1.600H2.600a1.600 1.600 0 0 1-1.600-1.600z" fill="#4aa6e6"/><path d="M1 6.600h26v13.800a1.600 1.600 0 0 1-1.600 1.600H2.600a1.600 1.600 0 0 1-1.600-1.600z" fill="#64bdf4"/><path d="M1 6.600h26" stroke="#8cd2fa" stroke-width=".7"/><rect x="0" y="19.400" width="4.400" height="4.400" fill="#f4f4f4"/><path d="M1 23l2.400-2.600M1.600 20.200h2v2" fill="none" stroke="#111" stroke-width=".9"/></svg>
<svg class="abs" style="left:1868px;top:483px" width="28" height="25" viewBox="0 0 28 25"><path d="M1 3.200a1.600 1.600 0 0 1 1.600-1.600h6.800l2.400 2.400h13.600a1.600 1.600 0 0 1 1.600 1.600v14.800a1.600 1.600 0 0 1-1.600 1.600H2.600a1.600 1.600 0 0 1-1.600-1.600z" fill="#4aa6e6"/><path d="M1 6.600h26v13.800a1.600 1.600 0 0 1-1.600 1.600H2.600a1.600 1.600 0 0 1-1.600-1.600z" fill="#64bdf4"/><path d="M1 6.600h26" stroke="#8cd2fa" stroke-width=".7"/><rect x="0" y="19.400" width="4.400" height="4.400" fill="#f4f4f4"/><path d="M1 23l2.400-2.600M1.600 20.200h2v2" fill="none" stroke="#111" stroke-width=".9"/></svg>
<div class="dl" style="left:1832px;top:513px;letter-spacing:0.25px">emstyle</div>
<div class="dl" style="left:1832px;top:527px;letter-spacing:0.25px">alias</div>
<svg class="abs" style="left:1867px;top:550px" width="28" height="25" viewBox="0 0 28 25"><path d="M1 3.200a1.600 1.600 0 0 1 1.600-1.600h6.800l2.400 2.400h13.600a1.600 1.600 0 0 1 1.600 1.600v14.800a1.600 1.600 0 0 1-1.600 1.600H2.600a1.600 1.600 0 0 1-1.600-1.600z" fill="#4aa6e6"/><path d="M1 6.600h26v13.800a1.600 1.600 0 0 1-1.600 1.600H2.600a1.600 1.600 0 0 1-1.600-1.600z" fill="#64bdf4"/><path d="M1 6.600h26" stroke="#8cd2fa" stroke-width=".7"/><rect x="0" y="19.400" width="4.400" height="4.400" fill="#f4f4f4"/><path d="M1 23l2.400-2.600M1.600 20.200h2v2" fill="none" stroke="#111" stroke-width=".9"/></svg>
<div class="dl" style="left:1831px;top:580px;letter-spacing:0.25px">EmotiBit</div>
<div class="dl" style="left:1831px;top:594px;letter-spacing:0.25px">alias</div>
<svg class="abs" style="left:1865px;top:317px" width="29" height="11.500" viewBox="0 0 36 14" fill="none" stroke="#fff" stroke-width="1.700" stroke-linecap="square"><g transform="translate(0 1)"><path d="M1.500 3.500h6M4.500 1v9.500c-2 1-3.500 0-3-1.500s4-3.500 7-2 2 4.500-1 4.500M9 2l1.500 1.500"/></g><g transform="translate(12 1)"><path d="M3.500 1L1 5.500M2.500 4v7.500M5 4h6.500M8.200 1v9.500M5.500 10.800h5.500"/></g><g transform="translate(24 1)"><path d="M1 2h10M3 4h6v2H3zM1 7.500h10M2.500 9.200h7M6 .8v10.200c0 .8-1 .8-2 .6"/></g></svg>
<svg class="abs" style="left:1864px;top:392px" width="29" height="11.500" viewBox="0 0 36 14" fill="none" stroke="#fff" stroke-width="1.700" stroke-linecap="square"><g transform="translate(0 1)"><path d="M9 1.500C8 6 5 9 1.500 10.800M3 3.500l6.500 5"/></g><g transform="translate(12 1)"><path d="M1.500 2h9c-.5 2-2 3.500-3.500 4.200M6 4.500c0 3-1 5-3.500 6.500"/></g><g transform="translate(24 1)"><path d="M3.500 1v10.200M3.500 4.500l5 2.500M8.500 .8l1 1.500M10.500 .5l1 1.500"/></g></svg>
<svg class="abs" style="left:1864px;top:457px" width="29" height="11.500" viewBox="0 0 36 14" fill="none" stroke="#fff" stroke-width="1.700" stroke-linecap="square"><g transform="translate(0 1)"><path d="M6 .5v1.500M1.500 4V2.200h9V4M2.500 5h7M2.500 6.800h7M1 8.600h10M6 3.500v5c-.5 1.500-2 2.500-4.500 3M6 8.600c1 1.500 2.500 2.300 5 2.800"/></g><g transform="translate(12 1)"><path d="M1 1.500h4v5.500H1zM1 4h4M1 7v1.500h4.500V11M2 9v2M3.500 9v2M8.500 .8L6 4M8.500 .8l3 3.200M7 4.200h3M6.500 5.500h4.500v2.200H6.500zM8.700 5.500v2.200c-.3 1.800-1.200 2.800-2.700 3.500M8.900 8c.6 1.600 1.400 2.500 2.600 3.200"/></g><g transform="translate(24 1)"><path d="M1.500 3.200h9v4.500h-9zM6 .6v11"/></g></svg>
<!--ENDDESK-->
<div id="dock"></div>
<!--DOCKSVG-->
<svg class="abs" style="left:0;top:1160px" width="1920" height="40" viewBox="0 0 1920 40">
<defs>
<linearGradient id="gFinL" x1="0" y1="0" x2="0" y2="1"><stop offset="0" stop-color="#25a8f7"/><stop offset="1" stop-color="#1762d6"/></linearGradient>
<linearGradient id="gFinR" x1="0" y1="0" x2="0" y2="1"><stop offset="0" stop-color="#f6f8fa"/><stop offset="1" stop-color="#c9d3df"/></linearGradient>
<linearGradient id="gFox" x1="0" y1="0" x2="0" y2="1"><stop offset="0" stop-color="#ffb21c"/><stop offset=".55" stop-color="#ff6a1e"/><stop offset="1" stop-color="#f0284e"/></linearGradient>
<linearGradient id="gSaf" x1="0" y1="0" x2="0" y2="1"><stop offset="0" stop-color="#24b0f8"/><stop offset="1" stop-color="#1b5fd6"/></linearGradient>
<linearGradient id="gNavy" x1="0" y1="0" x2="1" y2="1"><stop offset="0" stop-color="#0a1424"/><stop offset=".5" stop-color="#14304f"/><stop offset="1" stop-color="#0b1a2e"/></linearGradient>
<radialGradient id="gSpi"><stop offset="0" stop-color="#0e0e0e"/><stop offset=".3" stop-color="#333"/><stop offset=".55" stop-color="#7c7c7c"/><stop offset=".72" stop-color="#2a2a2a"/><stop offset=".84" stop-color="#3a3a3a"/><stop offset=".88" stop-color="#f4f4f4"/><stop offset="1" stop-color="#d4d4d4"/></radialGradient>
<radialGradient id="gRad"><stop offset="0" stop-color="#5a5018"/><stop offset=".7" stop-color="#2a250c"/><stop offset="1" stop-color="#15130a"/></radialGradient>
<linearGradient id="gRain" x1="0" y1="0" x2="1" y2="0"><stop offset="0" stop-color="#e01010"/><stop offset=".25" stop-color="#f0e010"/><stop offset=".45" stop-color="#f8f8e8"/><stop offset=".6" stop-color="#20c020"/><stop offset=".8" stop-color="#1030e0"/><stop offset="1" stop-color="#8010a0"/></linearGradient>
<linearGradient id="gRain2" x1="0" y1="0" x2="1" y2="0"><stop offset="0" stop-color="#1030e0"/><stop offset=".3" stop-color="#20c020"/><stop offset=".6" stop-color="#f0e010"/><stop offset="1" stop-color="#e01010"/></linearGradient>
<linearGradient id="gFlash" x1="0" y1="0" x2="1" y2="1"><stop offset="0" stop-color="#d01820"/><stop offset="1" stop-color="#6e080c"/></linearGradient>
<radialGradient id="gAud" cx=".5" cy=".35"><stop offset="0" stop-color="#ffe030"/><stop offset="1" stop-color="#f07a10"/></radialGradient>
<linearGradient id="gTune" x1="0" y1="0" x2="0" y2="1"><stop offset="0" stop-color="#f8486a"/><stop offset=".5" stop-color="#c050e0"/><stop offset="1" stop-color="#2a9af8"/></linearGradient>
<radialGradient id="gGtr" cx=".4" cy=".5"><stop offset="0" stop-color="#ffc040"/><stop offset=".6" stop-color="#d86a18"/><stop offset="1" stop-color="#4a200a"/></radialGradient>
<linearGradient id="gDk" x1="0" y1="0" x2="0" y2="1"><stop offset="0" stop-color="#9a9a9a"/><stop offset=".5" stop-color="#4a4a4a"/><stop offset="1" stop-color="#1e1e1e"/></linearGradient>
<linearGradient id="gGrn" x1="0" y1="0" x2="0" y2="1"><stop offset="0" stop-color="#78c22a"/><stop offset="1" stop-color="#3f8f14"/></linearGradient>
<linearGradient id="gQ" x1="0" y1="0" x2="0" y2="1"><stop offset="0" stop-color="#3aa0ff"/><stop offset="1" stop-color="#0830c8"/></linearGradient>
<linearGradient id="gZoom" x1="0" y1="0" x2="0" y2="1"><stop offset="0" stop-color="#3a86f8"/><stop offset="1" stop-color="#2f62ee"/></linearGradient>
<linearGradient id="gInt" x1="0" y1="0" x2="1" y2="1"><stop offset="0" stop-color="#2a86d8"/><stop offset="1" stop-color="#0e56a8"/></linearGradient>
<linearGradient id="gSys" x1="0" y1="0" x2="0" y2="1"><stop offset="0" stop-color="#c2c6ca"/><stop offset="1" stop-color="#5e6266"/></linearGradient>
<linearGradient id="gVlc" x1="0" y1="0" x2="1" y2="0"><stop offset="0" stop-color="#ffa020"/><stop offset="1" stop-color="#f06a00"/></linearGradient>
<linearGradient id="gHouse" x1="0" y1="0" x2="0" y2="1"><stop offset="0" stop-color="#1f5a9a"/><stop offset=".45" stop-color="#0f2c5a"/><stop offset="1" stop-color="#0a2048"/></linearGradient>
<linearGradient id="gScan" x1="0" y1="0" x2="0" y2="1"><stop offset="0" stop-color="#8ab8d8"/><stop offset="1" stop-color="#e8f0f6"/></linearGradient>
</defs>
<g transform="translate(25.3 3)"><rect x="3" y="4" width="24" height="22" rx="3" fill="url(#gFinR)"/><path d="M3 7a3 3 0 0 1 3-3h10.5c-2.2 4-3 8-3.2 11.5h3.2c0 3.6.6 7.4 1.6 10.5H6a3 3 0 0 1-3-3z" fill="url(#gFinL)"/><path d="M7.6 18.4q7.4 5.4 14.8 0" fill="none" stroke="#17325a" stroke-width="1.1"/><path d="M9.8 9.6v3.2M20.4 9.6v3.2" stroke="#17325a" stroke-width="1.3" stroke-linecap="round"/><path d="M16.5 4c-2.2 4-3 8-3.2 11.5h3.2c0 3.6.6 7.4 1.6 10.5" fill="none" stroke="#17325a" stroke-width=".7"/></g>
<rect x="39.1" y="34.600" width="2.600" height="2.600" rx=".6" fill="#4a0a06"/>
<g transform="translate(57.5 3)"><path d="M7.600 7.200l13.600-5 6.400 19.600-14.400 5.800z" fill="#eeeef0" stroke="#d4d4d8" stroke-width=".5"/><path d="M12.5 9l8-2M13.3 12l8-2M14 15l8-2M14.8 18l8-2M15.6 21l6-1.6" stroke="#c4c8c4" stroke-width="1"/><path d="M26.4 8.4l-8.6 16.4" stroke="#3fae3a" stroke-width="2.6"/><path d="M17.8 24.8l-.9 2.4 2.3-1.5z" fill="#e8c890"/><path d="M8.400 2.400l5.600 3.100v6.400l-5.600 3.200-5.600-3.200V5.500z" fill="#141414" stroke="#444" stroke-width=".6"/><text x="8.4" y="11.6" font-family="Liberation Serif" font-weight="bold" font-size="8.5" fill="#fff" text-anchor="middle">J</text></g>
<rect x="71.3" y="34.600" width="2.600" height="2.600" rx=".6" fill="#4a0a06"/>
<g transform="translate(88.5 3)"><path d="M5.2 6.4l17-3.6 4 20.6-16.6 4z" fill="#f5f5f7" stroke="#dcdce0" stroke-width=".5"/><path d="M25.6 3.6l-6.2 23.6" stroke="#a2a4ac" stroke-width="2.2"/><path d="M24.6 3.2l-6 23" stroke="#d4d6dc" stroke-width=".8"/></g>
<g transform="translate(120.0 3)"><path d="M4 8l16-4.4 5.4 19L9.6 27.4z" fill="#f3f3f0"/><path d="M6.4 6.6l16-3.6 4 19.6-15.6 4.2z" fill="#72bd30"/><path d="M6.4 6.6l16-3.6 1.6 8-15.4 5z" fill="#86cc44" opacity=".7"/><path d="M26.2 3.4l-6.4 23.2" stroke="#f2f2ee" stroke-width="2.2"/><path d="M27 3.8l-6.2 22.6" stroke="#b8baa8" stroke-width=".7"/></g>
<g transform="translate(151.5 3)"><circle cx="14.6" cy="16.6" r="11.6" fill="url(#gFox)"/><path d="M17.5 1.8c3.2 1.6 4.2 4.4 3.8 6.8 2.6 1.2 5.2 4 5 8.6-1-2.2-2.2-3.2-3.4-3.6.6-2.4-.6-5.2-3-6.6-2-1.2-2.8-3-2.4-5.2z" fill="#ffd028"/><circle cx="13.6" cy="15.2" r="5.6" fill="#6a2ad6"/><path d="M8.4 11.2c2-1.6 4.4-.8 5.6.6 1.4.2 3-.2 3.8-1-.2 2-1.600 3.200-3.200 3.600-1 2.200-3.600 2.400-5 1.400z" fill="#ff8a1e"/><path d="M10 18c3 2.400 7.200 1.400 8.800-1.400" fill="none" stroke="#a838c8" stroke-width="1.4"/></g>
<rect x="165.3" y="34.600" width="2.600" height="2.600" rx=".6" fill="#4a0a06"/>
<g transform="translate(183.0 3)"><rect x="3.2" y="3.6" width="23.6" height="23.6" rx="4.5" fill="#fcfcfc"/><circle cx="15" cy="15.4" r="9" fill="#e8453c"/><path d="M15 15.4L7.200 10.900A9 9 0 0 0 12.400 24z" fill="#2fa84f"/><path d="M15 15.4l-2.600 8.600A9 9 0 0 0 22.800 10.900z" fill="#fbc116"/><path d="M15 15.4L22.800 10.900A9 9 0 0 0 7.200 10.900z" fill="#e8453c"/><circle cx="15" cy="15.400" r="4.300" fill="#fff"/><circle cx="15" cy="15.400" r="3.300" fill="#4c8bf5"/></g>
<g transform="translate(214.5 3)"><rect x="3" y="3.600" width="24" height="24" rx="6.500" fill="#c8232c"/><rect x="3" y="3.200" width="24" height="22.600" rx="6.500" fill="#ea3a40"/><circle cx="15" cy="14.600" r="8.600" fill="#fff"/><path d="M9.600 10.400c1.800-1 3.200 0 3.800 1.600l1.600 3.400 1.600-3.400c.8-1.800 2.400-2.400 3.800-1.400l-3.600 8.200c-.8 1.600-2.800 1.600-3.600 0z" fill="#e22c34"/></g>
<g transform="translate(246.0 3)"><circle cx="15" cy="15.400" r="12.800" fill="#e6eaee"/><circle cx="15" cy="15.400" r="11.700" fill="url(#gSaf)"/><path d="M23 7l-6.400 10-3.200-3.200z" fill="#f2453a"/><path d="M7 23.800l6.400-10 3.200 3.200z" fill="#f6f8fa"/></g>
<g transform="translate(277.5 3)"><g transform="rotate(-10 15 15)"><text x="14.600" y="24" font-family="Liberation Serif" font-weight="bold" font-size="25" text-anchor="middle" fill="#34a81e" stroke="#e8560e" stroke-width="1.600" letter-spacing="-4.500" paint-order="stroke">FB</text></g></g>
<rect x="291.3" y="34.600" width="2.600" height="2.600" rx=".6" fill="#4a0a06"/>
<g transform="translate(308.5 3)"><rect x="3" y="5" width="24.600" height="20.400" rx="1.200" fill="#1c1c1c" stroke="#3c3c3c" stroke-width=".8"/><path d="M5.600 8.400l2.600 1.500-2.600 1.500" fill="none" stroke="#f0f0f0" stroke-width="1"/><path d="M9 12h3" stroke="#f0f0f0" stroke-width="1"/></g>
<g transform="translate(340.4 3)"><rect x="2.800" y="2.800" width="24.800" height="24.600" rx="1.500" fill="#3a3d3f"/><circle cx="17" cy="10.300" r="3.700" fill="none" stroke="#fff" stroke-width="1.900"/><circle cx="13.600" cy="18.600" r="5" fill="none" stroke="#fff" stroke-width="2.100"/><circle cx="13.600" cy="18.600" r="2.300" fill="#86e2d8"/></g>
<g transform="translate(371.0 3)"><rect x="3" y="3.400" width="8" height="7.400" fill="#2a7a2a"/><rect x="4" y="4.300" width="6" height="5.600" fill="#4cd04c"/><rect x="3" y="13.600" width="24.600" height="13.400" fill="#e4e4e4" stroke="#3a3a3a" stroke-width="1.200"/><rect x="21" y="14.600" width="6" height="11.600" fill="#f4f4f4"/><path d="M3 26.700h9" stroke="#111" stroke-width="2"/><text x="5" y="24.600" font-family="Liberation Mono" font-weight="bold" font-size="11.500" fill="#000">Pd</text></g>
<g transform="translate(403.8 3)"><rect x="2.200" y="2.600" width="25.800" height="25.800" rx="3" fill="url(#gNavy)"/><path d="M10.600 23.400V8h4.200a4.300 4.300 0 0 1 0 8.600h-4" fill="none" stroke="#fff" stroke-width="1.900"/><circle cx="19.400" cy="22.400" r="1.300" fill="none" stroke="#fff" stroke-width=".9"/><circle cx="23" cy="22.400" r="1.300" fill="none" stroke="#fff" stroke-width=".9"/></g>
<g transform="translate(434.3 3)"><rect x="2.200" y="2.600" width="25.800" height="25.800" rx="2.500" fill="url(#gNavy)"/><text x="15.200" y="24" font-family="Liberation Serif" font-size="24" fill="#fff" text-anchor="middle" stroke="#fff" stroke-width=".5">P</text></g>
<g transform="translate(466.3 3)"><circle cx="15" cy="15.600" r="11.600" fill="#111"/><text x="15.400" y="21.600" font-family="Liberation Serif" font-size="16" fill="#fff" text-anchor="middle">i</text><text x="18.300" y="18" font-family="Liberation Serif" font-size="12" fill="#fff" text-anchor="middle">3</text></g>
<g transform="translate(497.4 3)"><path d="M15 2.600l12 4.800v14.400L15 28 3 21.800V7.400z" fill="#7a7a7a" stroke="#4a4a4a" stroke-width=".8"/><path d="M15 2.600l12 4.800-12 5.200L3 7.400z" fill="#b6b6b6"/><path d="M3 7.400l12 5.200V28L3 21.800z" fill="#9a9a9a"/><path d="M15 12.600l12-5.200v14.400L15 28z" fill="#727272"/><path d="M5.600 11.400l7 3v9.800l-7-3.600z" fill="#6c6c6c"/><path d="M7.600 14.200l3.200 1.400v4.800l-3.200-1.600z" fill="#8e9a8e"/><path d="M17.400 14.400l7-3v9.200l-7 3.600z" fill="#565656"/><path d="M19.400 15.800l3.200-1.400v4.600l-3.200 1.600z" fill="#7c8a7c"/><path d="M9.600 6.600l5.400-2 5.400 2-5.400 2.200z" fill="#8e8e8e"/></g>
<g transform="translate(528.7 3)"><circle cx="15" cy="15.600" r="12.400" fill="url(#gSpi)"/><path d="M15 15.600c2-2 5-1 5 2s-4 5-7.500 3-3.500-8 .5-10 9 0 10 4" fill="none" stroke="#d8d8d8" stroke-width="1.200" opacity=".75"/></g>
<g transform="translate(560.5 3)"><circle cx="15" cy="15.400" r="13" fill="#1c9aa0"/><path d="M15 15.400c-1.600-2.400-3-3.800-5-3.800a3.800 3.800 0 0 0 0 7.600c2 0 3.400-1.400 5-3.800s3-3.800 5-3.800a3.800 3.800 0 0 1 0 7.600c-2 0-3.400-1.400-5-3.800z" fill="none" stroke="#fff" stroke-width="2.100"/><path d="M8.600 15.400h2.800M18.600 15.400h2.800M20 14v2.800" stroke="#fff" stroke-width="1"/></g>
<rect x="574.3" y="34.600" width="2.600" height="2.600" rx=".6" fill="#4a0a06"/>
<g transform="translate(591.7 3)"><path d="M8 4.500h14l2.500 3h2.500v6l-1.500 2 1.500 2v5l-3 1.500-2 3.500H8l-2-3.500-3-1.500v-5l1.500-2L3 13.500v-6h2.500z" fill="#3b3b3b"/><path d="M10 6h10l1.500 3.500h-13z" fill="#2a2a2a"/><circle cx="10.500" cy="11" r="1" fill="#e8602a"/><circle cx="19.500" cy="11" r="1" fill="#e8602a"/><path d="M11 15.600h8" stroke="#e8602a" stroke-width="1.300"/><path d="M9.600 19v4M12.400 20v3.600M17.600 20v3.600M20.400 19v4M15 21v3" stroke="#f0f0f0" stroke-width="1"/></g>
<g transform="translate(623.5 3)"><path d="M1.500 3.500l16.200-2.300 11.500 17.200-18.900 2z" fill="#161616"/><path d="M1.500 3.500l8.800 16.900.7 8.200L3.500 9.600z" fill="#8c8c8c"/><path d="M10.300 20.400l18.900-2v6.100L11 28.600z" fill="#d6d6d6"/><path d="M10.600 23l18.600-2.400M10.800 25.600l18.400-2.800" stroke="#a2a2a2" stroke-width=".6"/><path d="M5 4l9.500-1.300 6 9z" fill="#444" opacity=".7"/></g>
<g transform="translate(654.6 3)"><ellipse cx="8.400" cy="15" rx="1.900" ry="12.400" fill="#fbfbf6" transform="rotate(-4 8.400 15)"/><ellipse cx="8.400" cy="15" rx="1.200" ry="11" fill="#f0e8d8" transform="rotate(-4 8.400 15)"/><path d="M4 14l24-1.500v2L19 17l-2.500 1-6.500-1.500z" fill="#fafafa"/><path d="M14.600 16.500l3.600.5 3 10.500-2.600.3-1.600-5-1.600 5-2.400-.3z" fill="#f2f2f2"/><ellipse cx="18.600" cy="9.400" rx="2.300" ry="3.400" fill="#1c1c1c"/><ellipse cx="18.600" cy="10.400" rx="1.300" ry="2.200" fill="#f8f8f8"/><path d="M16.800 12.600h3.600l-.4 1.200h-2.800z" fill="#f0a020"/><circle cx="8.600" cy="15" r="1.200" fill="#d89030"/><path d="M13 27.500h4M19 27.500h4" stroke="#c85a28" stroke-width="1"/></g>
<g transform="translate(687.0 3)"><path d="M1.600 14.400L24 1.800l4 26.200z" fill="#111"/><path d="M7 14.400L22 5.800l2.800 18.600z" fill="#fff"/><path d="M17.400 14.600l9 10.400M17.400 14.800l5.400-10M17.400 14.600H4" stroke="#111" stroke-width="2.400"/></g>
<g transform="translate(717.6 3)"><path d="M3 8l19-4 4 19-19.400 4.200z" fill="#2e8ae6"/><path d="M5 10l15.500-3.300 3.200 15.500L8 25.600z" fill="none" stroke="#7ab8f4" stroke-width=".6"/><path d="M23 6l-5.600 21" stroke="#2a2a2a" stroke-width="2.200"/><path d="M17 2.800l9.600.8 1.600 2.200-2.600-.2-.4 1.400-7.400-1.400z" fill="#c8ccd0" stroke="#8a8e92" stroke-width=".4"/></g>
<g transform="translate(750.0 3)"><circle cx="15" cy="15.600" r="12.800" fill="#6a6a60"/><circle cx="15" cy="15.600" r="11.600" fill="url(#gRad)"/><path d="M15 15.600L23.200 7.400A11.600 11.600 0 0 1 26.600 15.600z" fill="#c8b830" opacity=".55"/><circle cx="15" cy="15.600" r="7.500" fill="none" stroke="#8a7c20" stroke-width=".6"/><circle cx="15" cy="15.600" r="3.800" fill="none" stroke="#8a7c20" stroke-width=".6"/><path d="M3.400 15.600h23.200M15 4v23.200" stroke="#8a7c20" stroke-width=".5"/></g>
<g transform="translate(781.4 3)"><path d="M3 14.600C3 6 6 2.400 9 2.400S15 6 15 14.600z" fill="url(#gRain)" stroke="#111" stroke-width=".9"/><path d="M15 14.600c0 8.600 3 12.800 6 12.800s6-4.200 6-12.800z" fill="url(#gRain2)" stroke="#111" stroke-width=".9"/></g>
<g transform="translate(811.9 3)"><path d="M15 2.400L3 27.400h24z" fill="#c8c8c8"/><path d="M15 2.400L3 27.400l9.600-9.200z" fill="#1a3cc4"/><path d="M15 2.400l12 25-11.400-6.600z" fill="#d8242c"/><path d="M3 27.400h24l-11.400-6.600-3-2.600z" fill="#34c034"/><path d="M15 2.400l-2.400 15.800 3 2.600z" fill="#8a2a7a"/></g>
<g transform="translate(843.0 3)"><path d="M14 7c2-4 9-5 11 0 1.400 3.400-.6 7.600-3 9.400" fill="none" stroke="#3a2a20" stroke-width="2.400"/><path d="M4 8.400l10-2.800 1.800 7L6 15.600z" fill="#c4c4c4" stroke="#6a6a6a" stroke-width=".6"/><path d="M5.600 9l3.600-3 4.200 1-1 2.600z" fill="#d82a22"/><path d="M7 16.800l11.400-3 2.400 9L9.600 26z" fill="#cacaca" stroke="#6a6a6a" stroke-width=".6"/><path d="M9 17.600l4-3.400 4.800 1.400-1 3z" fill="#d82a22"/><rect x="11.600" y="19.400" width="3" height="2.600" fill="#3a3a3a" transform="rotate(-15 13 20.500)"/><path d="M7.600 11.400l5-1.400" stroke="#fff" stroke-width="1"/></g>
<rect x="856.8" y="34.600" width="2.600" height="2.600" rx=".6" fill="#4a0a06"/>
<g transform="translate(874.8 3)"><path d="M3.400 8.400L21 3.600l4.400 19.600L8 27.400z" fill="#2c44c4"/><path d="M3.400 8.400L21 3.600l1 4.400L4.600 12.600z" fill="#4a62d8" opacity=".6"/><circle cx="13.600" cy="16.400" r="5.600" fill="none" stroke="#5a74e0" stroke-width=".6"/><path d="M9.600 22.400L24.400 6.800" stroke="#c89a28" stroke-width="1.300"/><path d="M24.400 6.800l2.400-2.600M26 9.600l1.600.4M22.600 4.400l.2-1.600" stroke="#e8d048" stroke-width="1"/><path d="M26.400 12v15" stroke="#b8762a" stroke-width=".8"/></g>
<g transform="translate(906.7 3)"><path d="M3.600 2.400h21l-2.400 4H6z" fill="#4a4e52"/><path d="M5.400 6.400h17.400l-1 1.600H6.400z" fill="#8a8e92"/><rect x="5" y="8" width="19.600" height="13.600" rx="1" fill="#1c1e20"/><rect x="6.600" y="9.400" width="16.400" height="10" fill="url(#gScan)"/><path d="M4.400 21.600h20.800v1.600H4.400z" fill="#6a6e72"/><rect x="18.600" y="15.600" width="9.400" height="12.400" fill="#eceef0" stroke="#b0b4b8" stroke-width=".5"/><rect x="19.800" y="17" width="2.400" height="3.600" fill="#d87a28"/><rect x="22.800" y="20" width="3.600" height="3.600" fill="#c8ccd4"/><path d="M20 25h6.400" stroke="#a0a4a8" stroke-width=".7"/></g>
<g transform="translate(937.0 3)"><rect x="3" y="6" width="24.600" height="18" fill="#e6e6e6" stroke="#f6f6f6" stroke-width="1"/><path d="M4 7h9l-3 8-6 4z" fill="#8c8c8c"/><path d="M18 7h8.600v7z" fill="#b4b4b4"/><path d="M10 7l8 16.400M21 7L10 23.400" stroke="#fafafa" stroke-width="2"/><path d="M5 19.600l3-1.400 2 2-3 3H5z" fill="#d8443a" opacity=".7"/><path d="M9 3.400v3M21.600 3.400v3" stroke="#e8e8e8" stroke-width="1.400"/><path d="M9 24v4M20.600 24v4" stroke="#c8a8a0" stroke-width=".8"/></g>
<g transform="translate(967.6 3)"><path d="M7 7c-1-3.600 2.400-5.600 4.800-3.800h6.400C20.600 1.400 24 3.400 23 7c-.6 2.400-2.600 3.600-8 3.600S7.600 9.400 7 7z" fill="#58a61e"/><circle cx="10.600" cy="4.800" r="1.700" fill="#dcecaa"/><circle cx="19.400" cy="4.800" r="1.700" fill="#dcecaa"/><path d="M24.800 8.400l2 3.400-1.200 8.600 1.800 7.200" fill="none" stroke="#7a9a2a" stroke-width="1.600"/><circle cx="14.600" cy="18.400" r="9.600" fill="#f4f4f2" stroke="#d8b43a" stroke-width="1.800"/><circle cx="14.600" cy="18.400" r="7.400" fill="none" stroke="#d4d4d4" stroke-width=".6"/><path d="M14.600 18.400l-3.600-5M14.600 18.400l5-1.600" stroke="#333" stroke-width="1.100"/></g>
<g transform="translate(1000.0 3)"><circle cx="15" cy="15.600" r="12" fill="#3a3a38" stroke="#e2aa22" stroke-width="2.400"/><circle cx="15" cy="15.600" r="13.300" fill="none" stroke="#f4d878" stroke-width=".6"/><ellipse cx="15" cy="16" rx="8" ry="6" fill="#6a6a68"/><path d="M8 13c3-3 9-3 13 0" fill="none" stroke="#9a9a98" stroke-width="1.200"/><path d="M9 18h12" stroke="#2a2a2a" stroke-width="1.600"/></g>
<g transform="translate(1032.5 3)"><rect x="3.400" y="5" width="23.400" height="22" rx="1" fill="#1a1a1a"/><rect x="5" y="7" width="20" height="5" fill="#2e2e2e"/><rect x="12" y="8" width="6" height="2" fill="#0a0a0a"/><rect x="4.600" y="13.600" width="21" height="12.400" fill="#f8f8f8"/><path d="M8.100 13.600v12.400M11.600 13.600v12.400M15.100 13.600v12.400M18.600 13.600v12.400M22.100 13.600v12.400" stroke="#888" stroke-width=".5"/><path d="M7.200 13.600h1.900v7.400H7.200zM10.700 13.600h1.900v7.400h-1.900zM17.700 13.600h1.900v7.400h-1.900zM21.200 13.600h1.900v7.400h-1.900z" fill="#111"/></g>
<g transform="translate(1063.0 3)"><path d="M4.400 20C3 2 27 2 25.600 20" fill="none" stroke="#1a2ce0" stroke-width="2.800"/><circle cx="15" cy="18.600" r="7.800" fill="url(#gAud)"/><path d="M7.400 19.200c1.600-1.400 2.400 1 3.800 0s2-1.200 3.600 0 2.400-1 3.800 0 2.200 1 3.800 0" fill="none" stroke="#e0281a" stroke-width="1.800"/><ellipse cx="4.400" cy="20.400" rx="3.200" ry="6.400" fill="#1a2ce0"/><ellipse cx="25.600" cy="20.400" rx="3.200" ry="6.400" fill="#1a2ce0"/></g>
<g transform="translate(1094.6 3)"><circle cx="15" cy="15.600" r="12" fill="#fbfbfd" stroke="url(#gTune)" stroke-width="1.500"/><path d="M12.200 9.600l8-1.800v10.400a2.400 2.200 0 1 1-1.400-2V11l-5.200 1.200v7.800a2.400 2.200 0 1 1-1.400-2z" fill="url(#gTune)"/></g>
<g transform="translate(1126.5 3)"><rect x="2.400" y="3" width="25.200" height="24.600" fill="url(#gFlash)"/><path d="M21.600 7c-5 0-6.400 3-7.400 6.600h3.400v2.800h-4.400c-1.200 3.600-2.600 6-6 6.200v-3c1.800-.2 2.400-1.600 3.200-4 1.400-4.600 3-11.400 11.200-11.600z" fill="#fff"/></g>
<g transform="translate(1157.0 3)"><path d="M14 15L27.600 2.400" stroke="#6a4a2a" stroke-width="2.200"/><path d="M26 1.600l2.800-1 .4 3-2 1.200z" fill="#3a2a1a"/><path d="M2.400 21.600c-2-4.400 1.800-8 5.400-7.200 1.600-3.600 6.200-4.400 8.600-1.600s2 5.600-.8 7.400c1.200 4-2 8.400-6.600 7.800s-5.400-3-6.600-6.400z" fill="url(#gGtr)" stroke="#3a1a08" stroke-width=".6"/><circle cx="11" cy="19.400" r="2" fill="#2a1408"/><path d="M5 24l3 2.400" stroke="#2a1408" stroke-width="1.400"/></g>
<g transform="translate(1189.8 3)"><path d="M15 3l12 12-12 12.600L3 15z" fill="#d0dcf2"/><path d="M15 3l12 12-12 4L3 15z" fill="#e4ecfa"/><path d="M8 12.400l6 8.400L27.400 3.400" fill="none" stroke="#f08a10" stroke-width="3.400"/><path d="M8 12.400l6 8.400" fill="none" stroke="#e0521a" stroke-width="3.400"/></g>
<g transform="translate(1220.3 3)"><circle cx="15" cy="15.600" r="13.300" fill="url(#gDk)"/><circle cx="15" cy="15.600" r="13.300" fill="none" stroke="#b8b8b8" stroke-width=".6"/><path d="M6 16C6 4.600 24 4.600 24 16" fill="none" stroke="#c0c0c0" stroke-width="2"/><rect x="8.600" y="9.600" width="12.800" height="13" rx="2.400" fill="#2a2a2a" stroke="#8a8a8a" stroke-width=".8"/><path d="M13.200 13.400l5-1.200v6.400a1.500 1.300 0 1 1-1-1.200v-3.400l-3 .8v4.600a1.500 1.300 0 1 1-1-1.200z" fill="#d8d8d8"/><ellipse cx="5.600" cy="17" rx="2" ry="3.400" fill="#1a1a1a"/><ellipse cx="24.400" cy="17" rx="2" ry="3.400" fill="#1a1a1a"/></g>
<g transform="translate(1252.8 3)"><rect x="2.600" y="7" width="11" height="9" fill="#1e64c0" transform="rotate(-8 8 11)"/><rect x="7" y="4" width="13" height="9" fill="#17406a"/><rect x="14.600" y="5.600" width="12.800" height="5.400" fill="#3cb030"/><text x="21" y="10.300" font-family="Liberation Sans" font-weight="bold" font-size="5.500" fill="#e8ffe0" text-anchor="middle">Free</text><rect x="8" y="13.600" width="9" height="10" fill="#2a62c8"/><rect x="14.600" y="11.600" width="12.800" height="15.400" fill="#123a6a"/><rect x="17" y="14" width="8" height="8.400" fill="#a84a2a"/><rect x="18.400" y="15.600" width="5" height="5" fill="#283848"/><text x="21" y="26.300" font-family="Liberation Sans" font-weight="bold" font-size="3.800" fill="#fff" text-anchor="middle">MP4</text></g>
<g transform="translate(1283.5 3)"><rect x="1.600" y="2.400" width="27" height="26.600" rx="2.200" fill="url(#gHouse)"/><path d="M15 5.600L4.600 15.400h3v9.800h15v-9.800h3z" fill="#fcfcfc"/><text x="14.800" y="22.800" font-family="Liberation Sans" font-weight="bold" font-size="14" fill="#143468" text-anchor="middle">G</text><path d="M15.500 18.500h4.500v6" stroke="#143468" stroke-width="1.600" fill="none"/></g>
<g transform="translate(1314.6 3)"><rect x="5" y="4" width="21" height="15" fill="#c8a070" transform="rotate(6 15 12)"/><rect x="3" y="6" width="21.600" height="16" fill="#e8dcc0" transform="rotate(-7 14 14)"/><rect x="4.400" y="7.400" width="18.800" height="13.200" fill="#5e94dc" transform="rotate(-7 14 14)"/><path d="M4.600 17.600l18.400-2.400.6 5-18.400 2.400z" fill="#3a62a8"/><path d="M4.200 14.600l18.600-2.200.3 2.400-18.600 2.400z" fill="#a0c0ec"/><circle cx="22" cy="20.400" r="5.200" fill="#5a6a78" stroke="#2e2e2e" stroke-width="1.600"/><path d="M19.600 18.800a3.400 3.400 0 0 1 4.800 0" stroke="#c8d4e0" stroke-width=".9" fill="none"/><path d="M25.600 24.400l2.600 2.800" stroke="#2e2e2e" stroke-width="2.200"/></g>
<g transform="translate(1346.0 3)"><rect x=".8" y="10.600" width="28.400" height="17.400" fill="#f9f3b8"/><text x="18" y="24" font-family="Liberation Sans" font-weight="bold" font-size="12.500" fill="#484848" stroke="#484848" stroke-width=".45" text-anchor="middle">App</text><path d="M2 22.600h5" stroke="#222" stroke-width="1.300"/><path d="M4.400 5.400h5.200v13l-2.600 3.600-2.600-3.600z" fill="#3a38b4"/><path d="M4.400 5.400h1.800v13H4.400z" fill="#6a68d8"/><path d="M4.400 5.400a2.600 2.600 0 0 1 5.200 0z" fill="#e8a8a0"/><path d="M5.600 20l1.400 2 1.400-2z" fill="#222"/><circle cx="7" cy="4" r="1" fill="#f0d040"/></g>
<g transform="translate(1377.5 3)"><circle cx="15" cy="15.600" r="13" fill="#f4f8e8"/><circle cx="15" cy="15.600" r="11.700" fill="url(#gGrn)"/><path d="M11.600 7.600h6.800v7.600h4.200L15 23.600 7.400 15.200h4.200z" fill="#f2f2f2" stroke="#d0d8c8" stroke-width=".4"/></g>
<g transform="translate(1409.0 3)"><path d="M15 2.400l10.200 4.900 2.500 11-7 8.900H9.300l-7-8.900 2.500-11z" fill="#2e90ea"/><circle cx="15" cy="15.400" r="8.400" fill="#0c1a38" stroke="#eaf2fc" stroke-width="1.100"/><circle cx="15" cy="15.400" r="5" fill="#143a80"/><circle cx="15" cy="15.400" r="2.400" fill="#3a9af8"/><circle cx="24" cy="16.400" r="1.200" fill="#eaf2fc"/></g>
<g transform="translate(1440.5 3)"><path d="M2 25.400L16.600 5.600l11.800 12-4 1.400-8-7.400L7 23.400z" fill="#2c2c2c"/><path d="M16.400 11.600l8 7.400-10.400 3.600-7.600 2z" fill="#e8762a"/><path d="M2 25.400l5-2 9.400-11.800.2-6z" fill="#3e3e3e"/></g>
<g transform="translate(1472.0 3)"><circle cx="14.600" cy="14.800" r="12" fill="#2a2c30"/><circle cx="14.600" cy="14.800" r="12" fill="none" stroke="#4a4e54" stroke-width=".8"/><circle cx="14.600" cy="14.800" r="7.400" fill="url(#gQ)"/><path d="M14 15l12 12.600" stroke="#23252a" stroke-width="4.200"/><path d="M8.600 12a7 7 0 0 1 12 0" stroke="#8ac8ff" stroke-width="1.200" fill="none" opacity=".7"/></g>
<g transform="translate(1504.0 3)"><rect x="3" y="12.600" width="24.400" height="14.800" rx="1" fill="#1c68d8"/><path d="M2.400 8.400l23.600-6.800 1 3.600L3.400 12z" fill="#111"/><path d="M5.600 7.600l3.400-1 1.400 3.400-3.400 1zM12.400 5.600l3.400-1 1.400 3.400-3.400 1zM19.200 3.600l3.400-1 1.400 3.400-3.400 1z" fill="#fff"/><path d="M3 11.400h24.400v2.800H3z" fill="#111"/><path d="M5.600 11.400h3.400l-1.400 2.800H4.200zM12.400 11.400h3.400l-1.400 2.800H11zM19.200 11.400h3.400l-1.400 2.800h-3.400z" fill="#fff"/><path d="M12.600 16.400h5v4.600h3L15.100 26.400 9.600 21h3z" fill="#fff"/></g>
<g transform="translate(1536.0 3)"><circle cx="14.600" cy="14.800" r="10.400" fill="#e8906a" stroke="#1c7ae2" stroke-width="3.800"/><path d="M19.600 20l7.600 7.400" stroke="#1c7ae2" stroke-width="3.400"/><path d="M14.600 14.800l5.400-6" stroke="#2a6ad8" stroke-width="1.600"/><path d="M11 12l3.600 2.800" stroke="#2a6ad8" stroke-width="1.400"/><circle cx="14.600" cy="14.800" r="6.400" fill="none" stroke="#3a8ae8" stroke-width="1" opacity=".7"/></g>
<g transform="translate(1566.6 3)"><path d="M4 23.600h22l1.600 4H2.400z" fill="#f07808"/><path d="M12.600 4.400Q15 2.400 17.400 4.400L24 24H6z" fill="url(#gVlc)"/><path d="M11.200 9.600h7.600l1.300 4H9.900zM8.600 17.600h12.800l1.200 3.800H7.400z" fill="#f8f8f8"/></g>
<g transform="translate(1597.8 3)"><path d="M5.400 3.400h19.200l2.600 10.200H2.800z" fill="#2c7cd6"/><path d="M7.400 5h15.200l1.800 6.800H5.600z" fill="#d8e8f8"/><circle cx="12.600" cy="8.400" r="2.200" fill="#e8a020"/><path d="M12.600 8.400V6.200a2.200 2.200 0 0 1 2.200 2.200z" fill="#d03a2a"/><path d="M16 6.600h6M16 8.400h6.400M16 10.200h5" stroke="#6a9ad8" stroke-width=".7"/><path d="M2.800 13.600h24.400v1.200H2.800z" fill="#1a5aa8"/><path d="M15 14.800v10.400" stroke="#c8ccd0" stroke-width="1.600"/><ellipse cx="15" cy="26" rx="5.600" ry="1.700" fill="#c8ccd0"/></g>
<g transform="translate(1629.0 3)"><path d="M4.600 5.600L23.400 2.600l3.800 22.600-18.600 3.200z" fill="#fbfbfb" stroke="#d8d8d8" stroke-width=".4"/><path d="M5.400 6.600l9-1.500.5 2.600-9 1.500z" fill="#f09020"/><path d="M8.400 11.600l7.600-1.200 1.200 6.800-7.600 1.200z" fill="#f08a18"/><path d="M10.600 13.400l3.600-.6.500 3.200-3.600.6z" fill="#3a6ad8"/><path d="M10.400 21.400l6.600-1M10.800 23.400l6.600-1M11.200 25.400l5-1M19 12l4.600-.8M19.400 14.200l4.600-.8M19.800 16.400l4.600-.8" stroke="#c4c4c4" stroke-width=".8"/><path d="M25.600 3l-5 22.600" stroke="#1a1a1a" stroke-width="2"/><path d="M26 2.400l-2 9" stroke="#f09a20" stroke-width="2.200"/><path d="M20.600 25.600l-.6 2.400 1.800-1.900z" fill="#333"/></g>
<g transform="translate(1660.7 3)"><rect x="2.800" y="3.200" width="24.600" height="24.600" rx="7.400" fill="url(#gZoom)"/><rect x="7" y="10.800" width="11.400" height="9.200" rx="2.200" fill="#fff"/><path d="M19.400 14.200l4-2.800v8.400l-4-2.800z" fill="#fff"/></g>
<g transform="translate(1692.5 3)"><rect x="1.600" y="2.400" width="26.800" height="27" rx="3.400" fill="url(#gInt)" stroke="#e8f0f8" stroke-width=".9"/><path d="M2.400 22c2 2 4 5 5 7H5a3 3 0 0 1-2.600-3z" fill="#e8a820"/><path d="M2.400 18c4 3 7 7 8.400 11" fill="none" stroke="#7ac0e8" stroke-width="1"/><path d="M3.600 20.400l3.800-6.800 2.200 3.600 3.200-6.400 2.200 5.200 3.600-7.800 1.800 4 5.600-7.600" fill="none" stroke="#fff" stroke-width="1.500" stroke-linejoin="miter"/><ellipse cx="21" cy="23.400" rx="5.400" ry="3.200" fill="#0e56a8" stroke="#fff" stroke-width=".8"/><text x="21" y="25" font-family="Liberation Sans" font-weight="bold" font-size="4.800" fill="#fff" text-anchor="middle">intel</text></g>
<rect x="1706.3" y="34.600" width="2.600" height="2.600" rx=".6" fill="#4a0a06"/>
<g transform="translate(1723.0 3)"><rect x="1.800" y="2.400" width="26.800" height="26.800" fill="#f0958a" stroke="#e8a8a0" stroke-width=".5"/><path d="M1.800 9h26.800M1.800 22h26.800M1.800 25.600h26.800M8.400 2.400v26.800M21.600 2.400v26.800" stroke="#e88478" stroke-width=".5"/><path d="M2.400 15.600h25.600" stroke="#8a4ac0" stroke-width="1.300"/><path d="M13.800 5.600v15.600M25.400 3.600v14" stroke="#8a4ac0" stroke-width="1.100"/></g>
<rect x="1736.8" y="34.600" width="2.600" height="2.600" rx=".6" fill="#4a0a06"/>
<g transform="translate(1755.6 3)"><circle cx="15" cy="15.600" r="12.700" fill="#fcfcfe"/><path d="M6 12.400Q15 5 24 12.400" fill="none" stroke="#2a78f0" stroke-width="3.400" stroke-linecap="round"/><path d="M10.400 17.600Q15 13.400 19.600 17.600" fill="none" stroke="#8c8e96" stroke-width="3" stroke-linecap="round"/><circle cx="15" cy="21.800" r="2" fill="#2a78f0"/><circle cx="22.800" cy="12.200" r="1" fill="#fff"/><circle cx="10.800" cy="17.400" r=".9" fill="#fff"/></g>
<rect x="1769.4" y="34.600" width="2.600" height="2.600" rx=".6" fill="#4a0a06"/>
<g transform="translate(1785.2 3)"><rect x="4.400" y="3.800" width="24.400" height="23.600" fill="url(#gSys)"/><circle cx="16.600" cy="15.400" r="9.400" fill="#1e1e1e"/><circle cx="16.600" cy="15.400" r="8.600" fill="none" stroke="#8a8e92" stroke-width="1.200" stroke-dasharray="1 1"/><circle cx="16.600" cy="15.400" r="6.600" fill="#3a3c3e"/><path d="M16.600 15.400V9M16.600 15.400l5.600 3.200M16.600 15.400L11 18.600" stroke="#141414" stroke-width="1.800"/><circle cx="16.600" cy="15.400" r="1.700" fill="#141414"/><circle cx="16.600" cy="15.400" r="6.600" fill="none" stroke="#141414" stroke-width="1.200"/></g>
<g transform="translate(1833.0 3)"><rect x="7" y="2.200" width="15.600" height="26.600" fill="#f2f6f8"/><path d="M7 4.400h15.600" stroke="#5a9ae8" stroke-width="1"/><path d="M7 7h15.600M7 9.400h15.600M7 11.800h15.600M7 14.200h15.600M7 16.600h15.600M7 19h15.600M7 21.400h15.600M7 23.800h15.600M7 26.200h15.600" stroke="#d4e4ee" stroke-width=".7"/><path d="M11.600 2.200v26.600M17.600 2.200v26.600" stroke="#dce8f0" stroke-width=".6"/><rect x="19" y="20.400" width="5" height="8" fill="#1c6ae0"/><rect x="24" y="20.400" width="4" height="8" fill="#eef2f8"/></g>
<g transform="translate(1863.5 3)"><path d="M4.600 5.600h21l-2.400 20.800c-.2 1-1.600 1.800-8 1.800s-7.800-.8-8-1.800z" fill="#dedcdc" opacity=".8"/><path d="M7 8h16.400l-2 18.400H9z" fill="#b8b8b8" opacity=".45"/><ellipse cx="15.100" cy="5.600" rx="10.500" ry="2.600" fill="#fafafa" opacity=".9"/><path d="M8 5.400l3-2.400 3 1.600 3.400-2 3 2.200 2 .8-3 1.600-4-.6-4 .8z" fill="#4a4a4a"/><path d="M11 4l2 1M17 3.600l1.400 1.600" stroke="#e8e8e8" stroke-width=".8"/><path d="M4.600 5.600l2.600 20.800M25.600 5.600l-2.400 20.800" stroke="#fff" stroke-width=".9" opacity=".9"/></g>
<path d="M1825.500 4v32.600" stroke="#c25a42" stroke-width="1"/>
</svg>
<!--ENDDOCKSVG-->
</body>
</html>
